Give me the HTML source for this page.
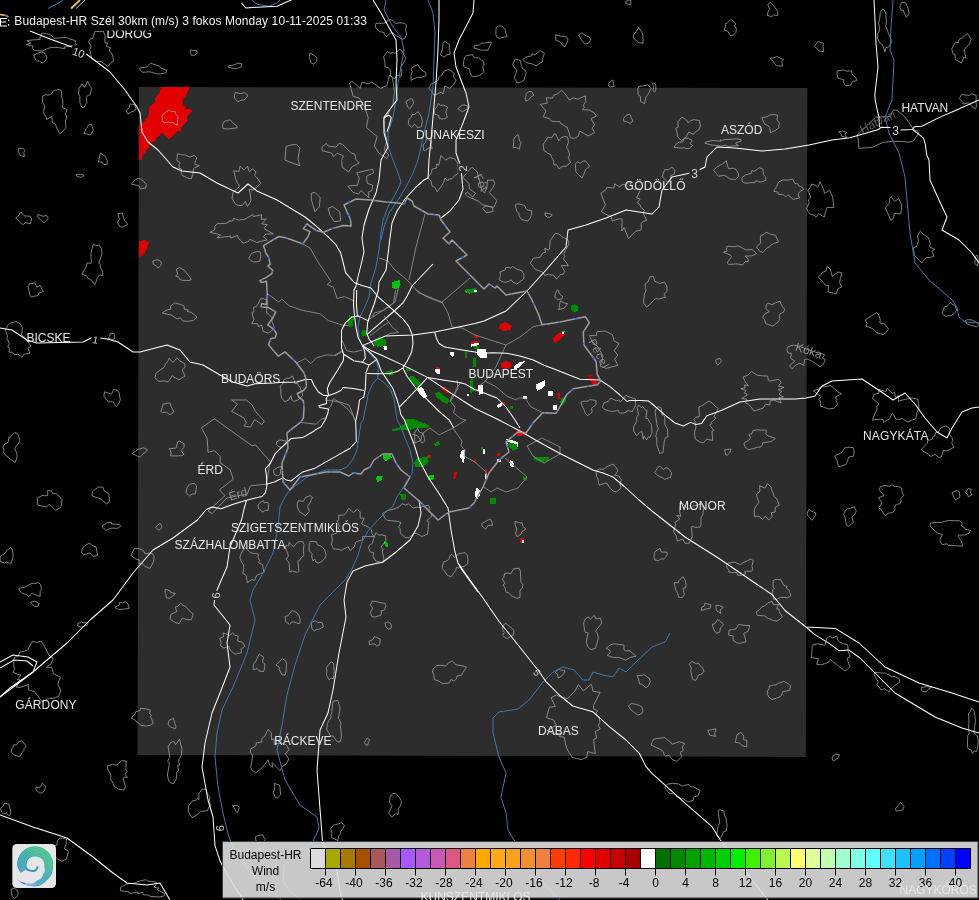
<!DOCTYPE html>
<html><head><meta charset="utf-8"><title>Budapest-HR Wind</title>
<style>html,body{margin:0;padding:0;background:#000;overflow:hidden}body{width:979px;height:900px;position:relative;font-family:"Liberation Sans",sans-serif}svg{position:absolute;left:0;top:0;display:block;will-change:transform}text{font-family:"Liberation Sans",sans-serif;font-size:12px}.rd{fill:none;stroke:#fff;stroke-width:1.02;stroke-linejoin:round}.rv{fill:none;stroke:#3f78b4;stroke-width:1}.tn{fill:none;stroke:#a4a4a4;stroke-width:0.78}.bd{fill:none;stroke:#8c8c8c;stroke-width:0.9}.bl{fill:none;stroke:#3c6cd8;stroke-width:1.1}.lb{fill:#e6e6e6}.fl{fill:#9a9a9a;font-size:11px}.dr{fill:#b40000}.r{fill:#e20000}.g{fill:#008c00}.w{fill:#fff}.g2{fill:#00c800}</style></head><body>
<svg width="979" height="900" viewBox="0 0 979 900">
<rect x="0" y="0" width="979" height="900" fill="#000"/>
<polygon points="139,87 807.3,88 805.8,756.9 137.5,754.9" fill="#2d2d2d"/>
<polygon class="r" shape-rendering="crispEdges" points="161.2,87 190.2,87 185.9,95.8 182.8,99 182.8,104.3 187,109.6 190.2,108.5 192.3,111.7 187,116.9 187,121.2 180.7,127.5 180.7,131.7 177.5,130.7 169,139.1 161.7,132.8 158.5,137 156.4,138 155.3,141.2 150,143.3 149,147.5 142.7,154.9 141.6,159.2 139,160.2 139,125.4 142.7,123.3 149,114.8 149,107.4 155.3,102.2 155.3,97.9 159.6,92.7"/>
<polygon class="r" shape-rendering="crispEdges" points="139,241.5 144.8,240 149,242.5 144.8,253.1 141.6,256.3 139,256.9"/>
<polygon class="g" shape-rendering="crispEdges" points="348.7,315.3 353.8,316 353.1,325.4 350.2,327.6 347.3,324 348.7,319.6"/>
<polygon class="g" shape-rendering="crispEdges" points="361.7,330.5 366.1,329.7 366.8,334.8 363.2,337 361,334.8"/>
<polygon class="g" shape-rendering="crispEdges" points="374,340.6 379.8,336.2 386.3,340.6 385.6,345.6 378.4,347.1 374,345.6"/>
<polygon class="g" shape-rendering="crispEdges" points="387,370.9 392.8,370.2 392.8,374.5 389.2,376 387,373.8"/>
<polygon class="g" shape-rendering="crispEdges" points="405.8,368 409.4,366.6 410.1,370.9 407.3,371.6"/>
<polygon class="g" shape-rendering="crispEdges" points="408.7,376.7 413.8,376 421.7,383.9 418.8,388.3 414.5,383.9 410.1,380.3"/>
<polygon class="g" shape-rendering="crispEdges" points="434.7,393.3 439,391.9 449.2,400.5 447.7,404.2 441.9,401.3 436.2,396.9"/>
<polygon class="g2" shape-rendering="crispEdges" points="465,290 475,290 475,292.9 469.4,293.6 465,292.2"/>
<polygon class="g" shape-rendering="crispEdges" points="465,350.7 466.8,350.7 466.8,357.2 465,357.2"/>
<polygon class="g" shape-rendering="crispEdges" points="470.8,378.2 473,378.2 473.7,391.2 470.8,394 470.1,389.7"/>
<polygon class="g" shape-rendering="crispEdges" points="404.4,418.6 414.5,418.6 414.5,420.5 404.4,420.5"/>
<polygon class="w" shape-rendering="crispEdges" points="383.4,346.4 387,345.6 387.3,349.2 384.1,350"/>
<polygon class="w" shape-rendering="crispEdges" points="449.9,352.9 452.8,351.4 453.2,357.2 450.6,355"/>
<polygon class="w" shape-rendering="crispEdges" points="434.7,370.2 436.9,368 439.8,368.8 440.2,374.6 436.9,373.8"/>
<polygon class="r" shape-rendering="crispEdges" points="436.2,368 439.8,368 439.8,369.3 436.9,369.6"/>
<polygon class="w" shape-rendering="crispEdges" points="418.8,388.3 421.7,386.1 427.5,396.9 424.6,398.4 421.7,395.5 418.1,391.2"/>
<polygon class="w" shape-rendering="crispEdges" points="467.2,394 468.7,394 468.7,396.2 467.2,396.2"/>
<polygon class="r" shape-rendering="crispEdges" points="441.2,387.5 443.4,386.8 450.6,391.9 449.2,393.3 446.3,391.9"/>
<polygon class="g2" shape-rendering="crispEdges" points="392.1,282.2 399.6,280 400.7,284.5 396.2,289 392.1,287.9"/>
<polygon class="g" shape-rendering="crispEdges" points="465.2,289 476,288.3 476.6,292.4 468.1,293.5"/>
<polygon class="w" shape-rendering="crispEdges" points="474.2,290.2 476.6,290.2 476.6,292.4 474.2,292.4"/>
<polygon class="g" shape-rendering="crispEdges" points="386,371 392.8,370.6 392.8,374.4 387.2,375.5"/>
<polygon class="g" shape-rendering="crispEdges" points="464.7,350.8 467,350.8 467,357.5 464.7,357.5"/>
<polygon class="g" shape-rendering="crispEdges" points="473,357.5 475.7,357.5 475.7,366.5 473,366.5"/>
<polygon class="r" shape-rendering="crispEdges" points="499.6,324.9 505.2,322 511.9,326.1 509.7,330.1 502.9,331 499.1,328.3"/>
<polygon class="r" shape-rendering="crispEdges" points="552.7,339.3 558.7,333.3 564,332 564.7,335.3 560,339.3 555.3,343.3"/>
<polygon class="g2" shape-rendering="crispEdges" points="562.4,330.6 564.6,330.6 564.6,332.4 562.4,332.4"/>
<polygon class="w" shape-rendering="crispEdges" points="562.2,332.2 564,332.2 564,333.8 562.2,333.8"/>
<polygon class="r" shape-rendering="crispEdges" points="473.7,335.1 477.5,335.1 477.5,338.4 473.7,338.4"/>
<polygon class="r" shape-rendering="crispEdges" points="471,341.8 478.2,340.7 478.9,343 471.5,344.3"/>
<polygon class="w" shape-rendering="crispEdges" points="471.2,344 478.9,342.8 478.9,345.2 471.5,346.6"/>
<polygon class="g" shape-rendering="crispEdges" points="473,346.5 479,345.5 479,348.5 474,348.5"/>
<polygon class="r" shape-rendering="crispEdges" points="501.3,363.3 506,360.7 510,362.7 512,365.3 510,367.3 505.3,369.3 501.3,367.3"/>
<polygon class="w" shape-rendering="crispEdges" points="477.1,348.5 486.1,348.5 487.2,357.5 480.4,357.5 477.1,354.2"/>
<polygon class="w" shape-rendering="crispEdges" points="450.1,352.2 453.5,351.9 453.5,356.4 451.2,355.3"/>
<polygon class="w" shape-rendering="crispEdges" points="435.5,367.6 439.3,367.6 440,374.4 436.6,373.3"/>
<polygon class="r" shape-rendering="crispEdges" points="435.5,367.2 439.3,367.2 439.3,368.6 435.5,368.6"/>
<polygon class="w" shape-rendering="crispEdges" points="513.3,366.7 520,362 524.7,361.3 520,366.7 515.3,370"/>
<polygon class="w" shape-rendering="crispEdges" points="383.8,346.3 386.7,346.3 386.7,349.7 383.8,349.7"/>
<polygon class="g" shape-rendering="crispEdges" points="409.7,380 416.4,380 422,386.7 418.7,387.9 414.2,384.5"/>
<polygon class="g" shape-rendering="crispEdges" points="435.5,392.4 440,393.5 449,399.1 447.9,403.6 442.2,401.3 436.6,396.9"/>
<polygon class="g" shape-rendering="crispEdges" points="470.3,380 473,380 473,391 470.3,391"/>
<polygon class="g" shape-rendering="crispEdges" points="404,419.3 416.4,420.4 425.4,423.8 429.9,426.1 427.6,428.3 414.2,428.3 407.4,430.6 400.7,429.4 392.8,431.7 392.1,429.4 399.6,427.2 405.2,423.8"/>
<polygon class="g" shape-rendering="crispEdges" points="433.3,444 438.9,440.7 440,445.2 435.5,445.8"/>
<polygon class="g2" shape-rendering="crispEdges" points="382.7,455.3 390.6,454.2 391.7,457.5 386.1,460.9 382.7,458.7"/>
<polygon class="g" shape-rendering="crispEdges" points="416.4,458.7 427.6,456.4 428.8,462 424.3,466.5 415.3,466.5 414.2,463.1"/>
<polygon class="g2" shape-rendering="crispEdges" points="428.8,475.5 434.4,474.4 434.4,478.9 429.9,481.1 427.6,478.9"/>
<polygon class="g2" shape-rendering="crispEdges" points="375.5,476.6 382.7,476.2 381.6,480 377.1,482.2"/>
<polygon class="g" shape-rendering="crispEdges" points="399.6,493.5 406.3,493.5 406.3,499.1 401.8,500.2"/>
<polygon class="g2" shape-rendering="crispEdges" points="383.8,540.7 388.3,542.9 388.3,547.4 384.9,546.3"/>
<polygon class="g" shape-rendering="crispEdges" points="490.1,498 496.2,498 496.2,503.6 490.1,503.6"/>
<polygon class="w" shape-rendering="crispEdges" points="506.3,438.9 517.5,441.8 518.7,446.3 516.4,448.4 507.4,443.9"/>
<polygon class="g" shape-rendering="crispEdges" points="507.3,441.8 516.5,444 517.8,448.7 513,450.8 508.4,446.3"/>
<polygon class="g" shape-rendering="crispEdges" points="533.3,456.4 549,457.5 547.9,460.9 540,462 534.4,459.8"/>
<polygon class="g" shape-rendering="crispEdges" points="523.1,475.5 527.6,478.9 525.4,481.1 522.5,478.9"/>
<polygon class="g" shape-rendering="crispEdges" points="480.5,447 482.5,447 482.5,449.5 480.5,449.5"/>
<polygon class="w" shape-rendering="crispEdges" points="417.5,386.7 423.1,389 427.6,396.9 423.1,398 418.7,393.5"/>
<polygon class="w" shape-rendering="crispEdges" points="478.2,384.5 482.7,384.5 482.7,393.5 479.3,394.6 478.2,390.1"/>
<polygon class="w" shape-rendering="crispEdges" points="496.2,405.8 501.8,402.5 505.2,403.6 498.4,408.1"/>
<polygon class="w" shape-rendering="crispEdges" points="467,394 469.2,394 469.2,396.2 467,396.2"/>
<polygon class="w" shape-rendering="crispEdges" points="522.5,396 526.7,396 526.7,398.5 522.5,398.5"/>
<polygon class="w" shape-rendering="crispEdges" points="461.3,450.8 464.7,449.7 464.7,458.7 463.1,464.3 461.3,458.7 459.6,457.5"/>
<polygon class="w" shape-rendering="crispEdges" points="482.7,448.5 485,448.5 485,454.2 482.7,454.2"/>
<polygon class="w" shape-rendering="crispEdges" points="476,487.9 479.3,489 480.4,494.6 477.1,499.1 474.8,495.7"/>
<polygon class="w" shape-rendering="crispEdges" points="484.9,469.9 487.2,469.9 487.2,478.9 484.9,478.9"/>
<polygon class="r" shape-rendering="crispEdges" points="484.9,468.8 487.2,468.8 487.2,474.4 484.9,474.4"/>
<polygon class="w" shape-rendering="crispEdges" points="508.5,459.8 513,460.9 514.2,466.5 510.8,466.5"/>
<polygon class="r" shape-rendering="crispEdges" points="508.5,458.7 510.3,458.7 510.3,462 508.5,462"/>
<polygon class="w" shape-rendering="crispEdges" points="497.3,458.7 500.7,458.7 500.7,462 497.3,462"/>
<polygon class="r" shape-rendering="crispEdges" points="497.3,453 500,453 500,456.4 497.3,456.4"/>
<polygon class="r" shape-rendering="crispEdges" points="441.1,387.9 444.5,387.2 450.1,392.4 447.9,393.5 443.4,390.8"/>
<polygon class="r" shape-rendering="crispEdges" points="428.1,455.3 431,455.3 431,458.2 428.1,458.2"/>
<polygon class="r" shape-rendering="crispEdges" points="454.2,471.7 456.9,471.7 456.9,474.4 455.1,478.9 453,478.9 454.2,475.5"/>
<polygon class="r" shape-rendering="crispEdges" points="474.4,458.7 475.7,458.7 475.7,463.1 474.4,463.1"/>
<polygon class="r" shape-rendering="crispEdges" points="515.3,430.6 524.3,430.6 525.4,435.1 517.5,436.2"/>
<polygon class="w" shape-rendering="crispEdges" points="517,432 523,432 523,433.3 517,433.3"/>
<polygon class="r" shape-rendering="crispEdges" points="501.8,402 505.2,402 505.2,404.7 501.8,404.7"/>
<polygon class="r" shape-rendering="crispEdges" points="519.8,538.4 524.3,538.4 524.3,542.9 519.8,542.9"/>
<polygon class="w" shape-rendering="crispEdges" points="521.5,540 524.3,540 524.3,542.9 521.5,542.9"/>
<polygon class="g" shape-rendering="crispEdges" points="570.7,306.7 574.7,304 578.7,306.7 578,310.7 574,312.7 570.7,309.3"/>
<polygon class="r" shape-rendering="crispEdges" points="587.3,375.3 592,375.3 592.7,378 596,380 597.3,384 593.3,385.3 590.7,381.3 588,378.7"/>
<polygon class="dr" shape-rendering="crispEdges" points="587.3,375.3 592,375.3 592.7,378 595,379.4 589,379.4 588,378.7"/>
<polygon class="r" shape-rendering="crispEdges" points="557.3,393.3 560,393.3 560.7,399.3 558,399.3"/>
<polygon class="w" shape-rendering="crispEdges" points="536,384.7 542,381.3 544.7,380 544.7,385.3 542,388.7 537.3,390.7 536,388"/>
<polygon class="w" shape-rendering="crispEdges" points="547.7,390.7 552.7,390.7 552.7,396 547.7,396"/>
<polygon class="w" shape-rendering="crispEdges" points="552.7,405 556.7,405 556.7,410 552.7,410"/>
<polygon class="g" shape-rendering="crispEdges" points="560,401.3 563.3,397.3 566.7,397.3 565.3,402.7 561.3,405.3"/>
<polygon class="g" shape-rendering="crispEdges" points="510,406 512.7,406 512.7,408.7 510,408.7"/>
<polygon class="tn" points="34.4,50.3 32,48.4 33.3,46 26.2,44.6 31,43 26.8,40.5 34.6,39.8 40.2,39.4 39.7,37.6 41.1,37.2 41.4,33.3 46.3,33.6 52.1,35.7 53.7,38.1 55.3,38.3 61.4,37.8 66.4,37.5 69.7,39 75.8,40.7 74.8,42.1 76.5,44.7 69.7,46.2 64.2,47.1 64.8,48.7 58.6,47.6 55.1,47.4 51,47.5 47.6,48.6 42.5,50.9 37.6,50.8"/>
<polygon class="tn" points="94.9,31.3 100,31.7 103.2,31 105.1,35.6 104.9,42.8 107.6,42.9 106.5,46.4 110.9,47.9 109,50 112.6,54.9 113.6,61.1 111.1,62.5 108.1,66.5 101.2,61.7 99.9,61.3 96.7,61.7 93.5,59.5 91.8,58.8 90.9,54.9 90.2,51.2 89.6,49.4 91.2,46.8 88.5,41.7 90.4,38.8 92.9,38.2"/>
<polygon class="tn" points="44.3,61.5 42.4,63.1 39.4,61.1 36.5,60.8 34.3,57.4 34,55 37.5,53.2 41.6,52.1 44.2,52.4 45.4,54.4 46.9,57.1 45.9,60.4"/>
<polygon class="tn" points="166.5,70 166.1,72.8 163,73.5 157.9,74 152.3,72.5 150,71.8 142.6,72.3 140.9,70.5 139.4,68.6 141,67.6 146.8,67 147.7,65.9 150.5,63.2 156.8,65.2 159.7,66.1 160.2,67.6 160.9,68.1"/>
<polygon class="tn" points="190.2,52.7 190.7,50 194,50.5 196.4,50.4 197.3,53.2 194.4,55.3 191.5,55.3"/>
<polygon class="tn" points="237.4,68.4 235.6,68.6 228.6,67.4 228.8,65.7 233.7,65.1 238,63.1 241.7,63.7 241.7,66.4"/>
<polygon class="tn" points="309.2,57.5 310,53.3 314.2,55.2 317,58 316.5,61.4 313.7,64.2 310.6,62.4 310.3,59.7"/>
<polygon class="tn" points="42.6,102.3 42.6,96.1 45,94.8 49,95.1 51.9,93.5 53.5,90.4 56.7,90.1 59,89.4 61.5,90.9 61.7,97 62.7,100.1 62.9,104 62.3,107.6 67.3,109.7 65.2,114 66.8,117 65.5,120.8 65.8,127.9 61.6,132.7 59.7,133.7 55,123.7 52.8,122.9 52.2,120.6 51.8,116.4 46.5,119.5 46.6,117.5 44.1,114.3 43.5,111.3 44.8,106.2"/>
<polygon class="tn" points="78.6,94 79,87.5 80.6,86.9 81.9,83.7 84.5,87.4 87.7,81.4 90,86.4 91.6,87.9 90.3,94.5 87.6,95.6 86.3,97.7 86.9,102.6 83.6,108 81.7,107.2 79.9,102.5 79.8,96.4"/>
<polygon class="tn" points="89.9,134.9 87.8,134.2 84,133.4 86.1,128.6 87.3,127.4 88.5,124.9 91.2,123.9 92.8,128.5 93.2,130.6 90.9,134.5"/>
<polygon class="tn" points="18.2,151.4 18.6,148.2 23.4,148.5 24.9,150.5 23.8,152.4 24.3,156.8 20,155.2"/>
<polygon class="tn" points="103.5,164.4 102.1,162.1 98.3,162 99.9,155.5 100.6,153.1 103.6,155.5 105.1,156.1 107,160.2 107.2,164.6"/>
<polygon class="tn" points="84,175.5 81.8,177.2 78.4,176.9 76.3,175.8 76.3,174.5 80.5,174.3 82.3,174.7"/>
<polygon class="tn" points="140.7,179.1 143.6,181.3 146.4,184.8 145.5,188.2 140.5,188.7 138.8,185.6 137.1,185.3 131.4,184.2 134.9,179.9 138.4,178.3"/>
<polygon class="tn" points="129,107.8 129.5,105.7 130.3,103.8 134.8,104.9 136,108.4 134.6,111 131.9,111.5 128,114.1 126,110.8"/>
<polygon class="tn" points="31.6,219 30.6,223.8 25.5,222.6 23.5,224.4 20.8,223.5 18.8,220.8 15.7,217.7 17.4,217 21,212 24.3,215.9 26.3,216 30.2,216.3"/>
<polygon class="tn" points="37.2,216.7 38.1,214.6 43.6,216.5 46.1,214.9 48.2,218.1 46.9,220 43.8,223 41.4,220.5"/>
<polygon class="tn" points="120.4,226.9 117.5,222.9 118.3,221 119.5,219.4 117.8,213.6 122.5,213 123.5,218.1 124.6,220.3 127.6,224.4 122.7,227"/>
<polygon class="tn" points="102.5,271 102.8,275.6 99.8,274.7 97.6,277.3 96.7,280.2 94.9,284.6 91.5,280.6 89.9,279.3 87.6,278.2 86.5,275.8 81.9,274.2 85.9,267 87.2,262.8 91.1,263.4 91.5,262.3 91.1,258.6 91,253 93,244.5 96.5,245.5 99.2,244.8 101.5,248.9 101.9,253.9 98.8,263.3 100.3,264.1 100.3,267.2"/>
<polygon class="tn" points="37,287.3 40,285.4 43.4,291.6 39,292.9 38.2,295.5 35,296.1 31.6,297.1 30.4,296.5 29.2,291.6 28.2,286.4 29.8,283.4 33,283.3 34.9,282.8"/>
<polygon class="tn" points="169.7,123 168.6,121.9 164.1,122.9 162.4,120.3 161.9,116.3 163.4,113.9 166.8,111.2 169.4,109.9 170.8,111.3 175.4,111.7 175.3,113.9 178.4,116.7 177.5,119.9 177.4,125.4 172.6,122.6"/>
<polygon class="tn" points="240.3,93.6 244.7,92.7 247.5,95 246.9,97.2 244.3,99.8 240.8,100.3 237.7,101.8 234.7,98.1 234.2,96 235.4,92.4"/>
<polygon class="tn" points="232.7,122.7 236.3,125.6 237.3,127.8 230.5,128.7 228.3,128.9 226.5,128.8 223.1,128.7 222.4,125.3 224.4,121.2 227.8,120.6 229.9,119.8"/>
<polygon class="tn" points="195.5,160.7 194.8,164.2 199.3,165.7 194.5,167.8 193.7,168.5 192.9,173.4 191.4,178.7 187.8,178.3 182.2,175.3 181.2,173.4 181.7,169 179.1,168.5 179.1,164.8 180.2,162.9 176.8,160.3 177.5,153.7 181.4,154.7 185.7,155.1 189.9,157.1 194.2,155.4 196.8,157.9"/>
<polygon class="tn" points="253.2,190.2 249,189.1 250.2,192.9 250.9,200.9 247.5,206.5 245.3,201.4 242.4,205.6 237,205.1 234.9,203.4 232.1,198.4 232.9,192.4 239.1,186.9 239.1,185 237.5,183.2 236,179.8 235.3,177 233.7,170.8 239,171.4 240,166.1 243.8,169.9 247.4,166.3 249.4,171.8 252.5,168.9 255.9,171.7 254.6,175.4 257.1,177.9 260.8,183.3 257.1,187 253.6,188.9"/>
<polygon class="tn" points="229,221.1 232.7,220.9 233.6,218.3 239.1,220.3 240.2,219.6 243.9,219.6 246.1,218.5 252.8,214.5 253.5,216.5 261.6,214.7 261.3,219.3 266.3,219.1 261.7,223.8 267.5,224.7 264.5,227.3 265.2,229.4 273.4,233.9 265.8,234.1 263.5,236.8 267.2,240.1 260.6,241.4 256.5,242.5 249.7,239.2 248.4,241.6 242.9,243.2 240.9,240.7 238.1,237.9 237.6,235.5 230.7,238 230.4,236.2 216.9,237.8 220.5,234.9 210.1,232.3 214.6,229.8 215,226.1 217.3,223.7 225.8,223.4 228.5,222.2"/>
<polygon class="tn" points="250.7,260.4 248.6,258.2 251.6,253.4 252.9,252.8 256.3,251.7 259.9,251.6 260.8,254.6 260.5,258.1 259.8,261.2 256.6,261.8 253.7,262"/>
<polygon class="tn" points="158,259.8 160.1,260.9 161.4,262.7 160.7,265.6 158.1,268.2 156.2,265.7 153.6,264.5 152.6,261.3 155.8,260"/>
<polygon class="tn" points="184.5,270.3 186.5,273.1 188.7,275.7 191.4,279.5 189.1,280.5 182.6,280.4 179.6,279.2 178.9,277.1 175.6,276.1 177.7,274.3 176.4,269 179.6,267.7"/>
<polygon class="tn" points="393.3,20.8 395.5,23.4 399.9,22.8 404.1,23.2 406.4,24.9 405.7,29.7 406.6,34 404.7,38.4 402.2,39.4 394.8,34.8 392.1,32.5 390.3,33.4 386.4,36.6 384.3,34.8 384.1,32.5 379.8,31.7 375.2,27.1 375.9,23.4 382.4,23.3 386.9,22.4 387.2,20.2 390.4,19.6"/>
<polygon class="tn" points="385.1,67.1 384.9,62 383.6,56.8 387.4,51.6 390.8,54 391.7,52.2 394.2,53.2 395.7,52.7 398.2,50.7 399.9,49.3 401.9,50.9 404.1,55.2 405.9,58.2 403.4,63.2 400.5,67.7 401.9,71.1 401,76.4 397.6,75.3 396.4,75.6 394.8,78.9 391.7,76.6 390.7,76.1 390.1,69.6 388.4,67.7"/>
<polygon class="tn" points="417.9,64.6 420,68.2 421.4,69.9 426,72.7 425.9,75.8 420.1,77.8 417.9,77.2 416.9,77.4 411.1,80.3 411.1,75.2 412.3,71.5 410.8,68.6 414.6,65.9"/>
<polygon class="tn" points="449.5,44.4 449.2,48.8 449.5,50.6 450.5,54.1 447,54.8 443.9,57.3 440.4,54.4 441.9,50.9 442.7,48 443,43.5 444.9,41.4"/>
<polygon class="tn" points="491.5,42.1 490.9,44 489.5,46.8 488,50.1 484.9,50 482.1,50.2 480.3,49.8 473.8,48 474.6,45.6 479.7,44.9 481.4,43.1 484.4,43"/>
<polygon class="tn" points="467.5,68.2 464.1,67 463.3,64 463.9,60.4 464.8,56.9 466.1,55.7 472.6,54.6 474.2,57.8 478.5,57.8 480.4,59.3 483.2,61.4 484.1,64 482.8,66.8 483.9,71.6 482.5,73.4 478.9,75.7 472.4,76.9 469.9,72.3 469.7,69"/>
<polygon class="tn" points="499.5,38.3 497.2,37.6 495.9,34.8 495.9,31.3 496.3,27 499.1,25.8 502.5,26.4 505.4,29.9 505.3,31.7 507.2,36.6 504.6,37"/>
<polygon class="tn" points="521.5,65.6 522.2,68.2 524.9,69.8 526.3,73.1 524.3,78.2 524.1,80.1 521.5,81.7 517.1,83 515.5,79.8 514.2,78.2 516,73.3 516.9,70.8 512.6,64.7 514.9,59.4 518.3,59.8 520.2,60.4"/>
<polygon class="tn" points="534.8,54.8 540.4,50.4 544.4,53 543.1,57.5 542.1,59.8 542.6,62.1 539.8,63.2 536.1,65.8 533.4,64.4 531.2,63.6 526.3,62.8 523.1,59.6 525.2,57.3 531.4,55.9 532,53.7"/>
<polygon class="tn" points="555.8,40.3 555.7,34.8 560.7,36.2 564.2,36.2 566.7,37 568,39.9 566.4,43.8 564.4,47.1 560.5,42.3 559.1,41.5"/>
<polygon class="tn" points="584.7,44 581.9,40.1 580.9,39.3 578.8,34.9 581.9,32.9 586.2,36 588.9,36.4 590.7,39.3 588.4,43.4"/>
<polygon class="tn" points="643.1,43.4 638.9,42.6 637.2,41.2 635.1,39.5 633.3,38.1 633.9,34.2 635.9,32 638.8,27.4 641.7,32.2 643.1,35.5 642.9,36.7"/>
<polygon class="tn" points="630.8,2.2 630.7,4.9 628.3,4.2 625.8,3.4 625.6,1.7 629.1,0 630.8,0.5"/>
<polygon class="tn" points="612.9,80 613.4,83.8 614.2,86.3 610.4,87.1 608.4,85.9 608.9,83.4 610,82"/>
<polygon class="tn" points="531.4,91.4 533.9,95.2 530.7,97.1 528.9,99.7 525.8,101.2 525.3,98.3 526.4,93.5 527.9,92"/>
<polygon class="tn" points="638.7,86.3 642.2,86 645,85.8 647.7,84.8 651.1,88 648.6,93.5 647.1,95.6 646,96.8 644.5,103.8 640.5,101.4 640.5,96.6 638.1,94.5 637.8,89.6"/>
<polygon class="tn" points="565.8,126.8 562.7,124.5 560.9,123.8 559.7,121.5 556.5,121.6 551.3,121.2 549.5,118.8 543.2,116.7 545.1,112.9 546,111 540.2,104.3 547.3,103.2 546.4,97.7 552.4,98.2 553.8,95.2 557.7,93.8 561.7,90.2 565.3,94.2 569.2,99.9 573.6,97.8 576.5,98.9 577.4,99.3 585.4,95.9 585.8,101.4 583.5,105 584.3,107.6 582.2,109.7 589,110 594.1,112.7 596.3,116.1 591.1,118.6 594.6,124.9 592.1,128.1 594.7,132.7 588.1,135.9 579.8,131 578.2,136.3 574.7,138.3 570.7,138 567.1,127"/>
<polygon class="tn" points="555.7,133.9 558.7,140.8 561.2,137.6 564.7,136.5 567.6,137 568.5,142 566.5,147.3 568,149.6 569.8,155 568.2,157.2 570.5,162.5 566,166.4 563.2,166.2 558.7,168.8 556.6,164.6 554,165.2 553.3,159.7 551.6,157.4 550.8,154.5 549.2,154.1 543.9,150.4 543.2,144.2 544.5,142.5 548,137.2 551.7,137.9 554.1,133.8"/>
<polygon class="tn" points="518.1,134.5 519.6,140.9 521.1,142.6 520.1,145.1 519.5,149.1 515.3,147.2 513,147.9 513.8,142.1 513.6,139.3 516.1,135.9"/>
<polygon class="tn" points="580.4,163.3 582.7,161 585.3,160.8 588.8,165 589.7,166.2 585.4,169.8 584.9,171.6 583.8,174.3 582.1,177.9 577.5,173.9 575.9,171.8 575.6,168 575.3,163.9 577.7,161.8"/>
<polygon class="tn" points="632.9,121.2 629.9,123.3 626.7,121.6 623.7,121.2 623.6,118.4 626,115.4 629.7,114.1 631.2,117.5"/>
<polygon class="tn" points="453.6,84.8 449.8,88.4 444.9,86 444.4,88.7 442.9,94 441.2,92.1 434.1,95.3 431.7,91.5 428.9,88.1 431,84.5 436.6,81.3 438.5,79.9 438.4,77.9 440.3,75.9 442.3,74.8 444,70.9 449,69.5 454.3,73.4 453.4,76.6 456.2,80.1"/>
<polygon class="tn" points="406.8,104.2 405.8,101.7 409.9,99 412.4,98.9 413.7,103 412.3,105.1 409.8,109 408.2,107.7"/>
<polygon class="tn" points="420,114.6 421.5,117.4 422.3,121.2 421.6,126.5 417.5,127.9 416.4,125.6 414.5,124.3 411.5,127.3 408.3,124 408.8,119.3 410.8,117.7 412.8,114.1 414.1,114.9 416.3,112.9 418.1,111.8"/>
<polygon class="tn" points="447.3,117.4 444.7,118.7 441.5,119 438.9,118.1 438.8,115.5 434.5,114.2 434.1,109.8 436.8,107 438.2,103.4 440.5,105.6 443.2,105 445.6,106.2 447.6,107 445.8,111.9"/>
<polygon class="tn" points="457.8,108.7 461.9,105.3 463.7,104.8 467.7,105.9 467.1,109.1 462.4,111.8 460.6,110.5"/>
<polygon class="tn" points="432.3,148.5 428.8,147.9 425.6,150.3 423.5,150.3 423.2,144.7 425.4,142.7 426.8,138.3 428.1,139.4 431.6,141.5 431.1,144.6"/>
<polygon class="tn" points="436.8,167.9 436.4,164.1 438.9,165.2 439.9,160.1 440.9,155.4 444.4,159.1 445.7,160.1 450,157.5 454.8,158.9 457.5,162.7 457.8,165.3 458.3,173.5 454.7,175.3 451.9,178.8 448.7,179.1 447.7,181.1 445.1,178 443.5,182.8 441.3,186.3 437.2,191.8 434.8,187.4 432,185.9 431,181 427.9,178 431.4,172.6 432.1,169.2"/>
<polygon class="tn" points="515.1,204.9 517.2,203.8 522.5,204.7 524.6,205.8 526.1,208.6 527.3,209.9 531.7,210.8 531.2,215.8 529.9,218.5 528,221.1 523,219.9 520,217.8 519.1,215.7 518.8,213.5 516.8,211.1"/>
<polygon class="tn" points="545,215.4 544.9,212.9 548.4,213.5 551.7,214.4 552.1,215.3 549.6,217.2 547.3,217.1"/>
<polygon class="tn" points="614.7,183.9 619.8,187 622.3,184.2 625.6,185.1 629.4,181.3 631.9,186.6 633.8,189.6 637.8,188.5 640.5,189.8 636.6,197.8 640.1,199.1 637.1,202.8 639.6,204.3 640.9,207.4 644.4,210.2 643.2,213.3 646.7,220.3 642.9,221.5 641.2,223.8 641.3,230 635.8,231.1 631.9,235 628.4,238.3 624.1,227.6 621.8,231 622.1,219.2 619.6,218.7 615.9,219.7 612.2,221.1 611.7,217.7 609.2,215.5 605.8,214.3 601.5,211.6 604.3,206.6 605.3,204.5 603.2,199.4 600.9,193.1 605.9,189.9 607,187.3 613.9,188"/>
<polygon class="tn" points="562.6,237.2 567.6,239.4 569.1,243.8 564.9,251.6 563.6,253.8 564.9,256.6 563.1,258.7 566.2,262.3 568.2,265.7 561.3,265.5 564.7,271.4 563.1,274.3 560.4,274.6 556.5,279.1 553.3,274.9 551,275.3 548.9,274 544.8,275.5 543,272.5 541.1,271.5 535.6,269.5 534.2,267.8 530.3,263.2 533.2,258.4 540.4,257.1 542,253.8 543.8,252.5 545.6,252.4 544.6,248.2 548.8,250.3 549.7,247.5 550.2,240.5 555.2,233.3 559,234.1"/>
<polygon class="tn" points="517.8,269.5 521.9,270.8 524,274.8 523.6,279 518.7,282.6 516.8,284 512.9,282.2 511.3,279.9 509.7,281 505.8,282.3 503.4,281.9 499,279.9 500.5,275.4 500.1,271.9 505,270 505.9,267.5 508.6,267.5 511.1,268 512.6,266.5 514.4,267.8"/>
<polygon class="tn" points="561.9,298.9 557.2,299.7 554.8,297 555.6,293.4 557.6,289.7 559.8,294.1 562.5,296.3"/>
<polygon class="tn" points="660.2,298.4 658.3,299.1 655.7,298.4 653.8,300.2 651.2,303.1 646.7,307.1 643.7,303 644,298.1 644.5,293.5 646,290.5 645.6,287.6 645,284.1 647.8,282.2 650.2,276.6 653.5,276.6 654.7,281.2 656.6,282 659.6,283.5 664.5,282.1 667,286.4 666.9,291.3 664.1,294.1 665.5,297.3"/>
<polygon class="tn" points="733.3,35 730.5,35.9 727.8,31.2 724.1,30 725.5,26.9 725,24.2 727.6,22.9 730.7,19.5 732.6,20.5 735.8,23.7 734.3,25.9 736.4,28.5 736,32.3"/>
<polygon class="tn" points="773.9,6.2 776.1,9.2 777.9,11.8 777.8,15.4 773.6,15 771.8,16.6 767.1,15.4 768.4,10.7 769.8,9.5 767.8,4.4 770.5,2.5"/>
<polygon class="tn" points="774.6,63.5 773.9,61.9 769.8,58.4 773.4,57.8 777.3,56.5 780.8,58.6 783.4,59.2 781.9,61.8 782.3,66.1 776.6,65.8"/>
<polygon class="tn" points="820.4,42.3 823.4,43.2 823,46.5 823.7,51.8 819.9,51.1 818.3,50.5 817.1,48.5 814.3,46.5 817.7,41.8 818.5,41.6"/>
<polygon class="tn" points="850.7,85.1 845.6,85.7 843.7,83.1 843.8,79.8 842.3,79.3 837.9,78.3 837,73.2 837.2,70.8 844.2,70 846.4,71.1 851.6,70.9 851.9,73.4 853.5,76 855.7,77.3 856.7,80.5 852.7,81.5"/>
<polygon class="tn" points="969.6,43.8 966.1,47.7 964.2,49.9 964.5,52.4 966.2,58.2 963.7,57.1 961.5,63 958.1,61.1 955.2,59.5 955.1,54.6 952.8,53.6 951.8,48.9 953.3,45.6 955.4,42.4 958.5,42.7 958.7,40.2 960.9,38.4 962.6,37.7 967.3,33.4 971.1,39"/>
<polygon class="tn" points="891.3,40.1 890.8,44.2 887.8,47.7 886,47.4 884.9,51.8 883.3,46.4 881.4,43.8 880.5,43.5 879,41.1 877.5,38.3 877.8,33.5 879.3,31 879.4,26.6 878.5,23.4 879.5,19.9 880.3,12.6 882.2,9.1 884.1,10 885.8,13 886.4,22.1 885.7,26.9 886.7,27.9 887.3,30.2 888.6,33.6"/>
<polygon class="tn" points="906.2,17.3 903.9,12 903.2,10.1 901,10.2 899.7,6.7 901.7,2.5 905.4,2.7 907,5.7 908.1,8.4 909.2,13.8"/>
<polygon class="tn" points="971.7,93.8 976.2,95.4 976.1,99.1 975.9,102 976.8,106.7 974.8,109.2 969.2,103.4 968.5,102.8 963.1,104.1 962.9,102.3 959.3,98.6 961.8,94.5 967.1,95.2 969.4,95.5"/>
<polygon class="tn" points="845,134 846.6,137.6 841.3,136 841.3,134.7 838.7,131.8 842.3,131.1 846.7,132.3"/>
<polygon class="tn" points="777,119.5 777.6,120.8 779.8,123.2 778.9,125.3 778.8,127.7 775.3,130.4 770.6,132.7 769.6,127.3 767.4,125.1 764.9,124.5 763.8,122.2 761.6,117.8 767.6,116.6 769.5,115 774.2,114.5 777.5,115.3"/>
<polygon class="tn" points="682.1,117 686.5,120 688,122.7 690.5,120.9 693.5,119.6 699.5,120.6 700.4,126.1 698.7,129.9 694.6,132.5 693.4,134.4 688.7,132.1 687.6,134.1 686,137.2 681.6,140.5 677.7,137 676.9,132.1 675.8,128.3 678.2,127 677.9,121.9 679.8,119.6"/>
<polygon class="tn" points="684.1,147.7 681.5,148.1 674,147.4 675.8,144.5 679.1,142.1 682.6,142.1 684.5,138.1 688.6,138.3 692.4,140.8 689.9,143.5 692.7,145.5 689.1,148.6 685.5,148.5"/>
<polygon class="tn" points="719.3,145.5 714.8,145.4 709.7,144.6 704.8,143.1 706.8,141.6 713.2,140.5 720.8,141.2 720,140 722.7,140.3 724.8,139.6 730.1,139.3 736.9,138.9 741,139.6 741,141.3 736.1,142.7 735.8,143.8 738.6,145.6 732.5,145.9 728.8,146.6 725,145.1 720.9,146.3"/>
<polygon class="tn" points="718.4,176.3 716.9,174.4 716.1,173.2 713.5,170.3 717.2,166.9 720.5,164.9 721.9,164.5 726.3,160.7 727.4,165.6 728.5,168.5 733.7,168.2 736.3,169.8 738.5,173.8 738.4,176.6 735.8,179.4 730.2,179 725.6,176 724.2,175.2"/>
<polygon class="tn" points="754.9,182.7 752.1,182.6 745.1,183.3 742.3,181.6 741.8,177.7 745.8,174.8 751,173.5 751.9,170.5 754.2,171.3 759.4,167.8 762.9,169.1 763.3,174.4 765.8,177.3 766,180.1 761.2,182.1 755.9,180.9"/>
<polygon class="tn" points="801.8,186.9 803.7,189.5 800.1,191.3 798,194.1 799.5,198.1 793.2,199.3 787.8,194.7 785.7,196.8 782.5,194.3 778.5,194.4 777.9,192.1 773.8,191.3 775.3,188.3 776.8,186.6 777.3,184.3 779.1,181.7 782.5,180 788.2,180.1 792.5,179 795,183.7 797.5,183.6 799.3,186.5"/>
<polygon class="tn" points="808.5,199.9 810.9,197.2 807.9,190.6 809.9,188 811.9,184 815.8,185.3 817.8,187.6 820,181.8 822.2,186 823.5,189.6 824.6,193.4 829.7,190.3 830.8,192.9 832.6,196.8 833.2,200.6 833.7,207.6 827.1,207.5 826.2,209.7 825.2,212.7 824.6,216.8 822.2,215.9 818.5,213.5 816.1,217.1 814.4,215.4 810.4,214.3 808,211.6 806.7,208.2 809.1,202.7"/>
<polygon class="tn" points="675,170.7 673.8,174.5 670.8,175.5 670.7,181.6 667.3,181.8 663.8,178.2 662.2,177 663.2,173.2 664.8,169.6 668.5,169.8 671.9,167"/>
<polygon class="tn" points="653,90.4 653.6,87.6 652.7,83.2 655.2,83.2 655.8,86.1 655.8,89.5 654.7,92"/>
<polygon class="tn" points="778.7,241.9 773.4,243.6 770.7,245.3 769.9,246.7 766.9,248.1 762.9,252.5 759.9,251.5 756.5,246.8 760.6,243.1 760.6,240.9 760.3,238.2 760.5,235.7 764.2,234.4 766,232.1 770.4,234.2 774,234.9 775.9,235.9 777.1,238.9"/>
<polygon class="tn" points="738.1,245.8 743.1,248.5 746.4,250.1 751.9,249.4 754.2,251.3 756.5,253.6 751.6,255.9 745,256.1 748,258.7 748.2,261.9 745.2,261.5 742.5,265 737.2,263.9 728.8,264.4 727.1,263 731.1,257.3 731.5,256.5 730.4,255.2 723.5,252.2 727,251 726.4,249 727.1,246.3 734.3,246.7"/>
<polygon class="tn" points="888,213.8 885.3,207.9 888.2,204.3 889.4,203.3 889.6,198.2 891.5,196.7 893.7,200.5 895.1,201.2 898.7,198.4 899.3,199.8 901.6,204.9 901.4,210 900.7,213.8 896.8,213.5 894.4,213.3 893.4,218.4 890.7,220.3 889.5,217.1"/>
<polygon class="tn" points="926.3,257.7 924.4,259.6 921.5,262.8 919.6,260.5 916.4,257.4 914.2,254.7 914.2,253 913.1,247.9 916.8,246.3 917.2,244.2 918.5,241.1 917.4,235.7 920,231.4 924.5,235.3 927.8,237 929.4,240.2 930.3,244 929.5,246.8 934.6,249.2 931.9,251.2 933.9,256.1 930.7,257.4"/>
<polygon class="tn" points="837.6,288.9 836.5,293.9 833,293 831.5,292.8 828,291.8 828.5,285.3 826.2,286 824.5,283.9 823.3,282.2 818.3,277.2 822.5,272.4 826,271 827,266.7 830.2,269 832.3,276.3 833.8,275.1 837.9,272 842,272.9 840.4,278.4 839.5,282.4 841.7,287"/>
<polygon class="tn" points="975.1,256.8 976.8,255 978,258.6 978.3,261.4 977.2,266 974.9,263.3 975.1,260.8"/>
<polygon class="tn" points="9.2,343.8 8.5,341.1 6.8,338.9 7.6,336.2 5.3,330.2 7.9,325.4 10,323.1 15.9,321.6 20.4,323.9 22.3,327.7 21.7,334.8 22.7,336.2 25.2,337.6 26.5,340.2 27.8,342.1 31.1,345.9 27.9,348.4 30,353.1 23.8,354.2 22.2,357.4 17.9,354.1 14.8,354.8 12.3,352.3 8.8,352 9.9,348.3 7.7,347"/>
<polygon class="tn" points="113.3,339.6 108,338.2 109.6,336.5 110,333.7 113.8,333.7 114.7,335.2 114.8,338.1"/>
<polygon class="tn" points="111.5,394.2 113.6,389.4 117.4,390.4 119.5,393.2 119.6,396 120.3,399.5 119.2,403 116.4,406.6 112.6,401.6 110.2,401.8 108.4,401.9 106.8,399.6 103.8,396 104.6,391.7"/>
<polygon class="tn" points="8.8,437.2 10.5,437 14.8,432.4 17.8,434 19.9,440.4 18.7,443 15.6,446.9 14.8,449.2 16.8,452.8 17.1,457.3 15.1,462.5 10.6,459.4 8.9,457.7 5.5,455.2 3.7,452.5 4,450 2.8,447 4.9,443.9 8.3,442.1"/>
<polygon class="tn" points="37.1,498.5 41.9,495.6 45.9,495.7 47.7,495.7 47.7,490.5 51.4,490.9 52.8,493.9 55.8,493.6 60,497.1 62,499.6 61.3,505.8 60.6,507.7 55.7,510.3 51.2,506 49.2,504.2 46.2,507.1 42,506 38,505.3"/>
<polygon class="tn" points="103,487.2 104.3,491.2 105.8,491.7 109.2,494.4 109.1,495.8 109.5,501.4 106.7,504 101.8,499.8 99.8,498.6 98,498.1 91.9,495.7 92.5,491.8 94.7,489.6 98.8,487"/>
<polygon class="tn" points="106.1,530.5 102.7,527.4 102.6,525.2 105,524.2 106.8,522.6 111.6,522.3 111.7,524.1 119.3,524.4 120.7,526.1 117.7,528.3 111.8,528.1 108.7,529"/>
<polygon class="tn" points="90.6,544 93,546 96,546.8 96.8,551.2 97.6,555.1 93.2,556.8 90,553 88.6,553.2 83.7,554.9 81.6,552.5 82.6,547.9 85.1,545.5 88.8,543.4"/>
<polygon class="tn" points="13.1,555.8 12.4,559.5 11,563 9.4,563.4 6.5,561.9 4.8,563.1 0.2,561.6 0.2,556.1 3.2,554.6 5.1,553.3 7.1,550.1 11,547.5 12.7,550.9"/>
<polygon class="tn" points="28.8,584.9 31.6,583.5 34.3,583.4 38.8,582.8 40.7,584.6 41.4,589.6 40.1,591.7 40.2,596.5 34.8,594.6 32.1,593.1 28.8,596.6 26.4,594.6 22.8,593.5 19.1,590.1 19.2,588.3 25.9,586.8"/>
<polygon class="tn" points="144.9,553.8 148.4,553.2 152.3,553.5 154.2,556.9 153.7,561.1 151,566.6 149.8,568.3 145.1,566.5 141.9,563.4 138.9,563.4 139.3,560 135.7,558.9 131.2,555.7 134,548.8 139,548.6 142.6,550.2 144.1,551.9"/>
<polygon class="tn" points="141.9,455.4 139.2,457.1 135.4,455.1 132.1,453.6 135.5,451.1 138.3,449.4 143.4,447.8 147.6,449.7 145.2,452.6 143.5,453.4"/>
<polygon class="tn" points="174.9,317.5 172.1,315.5 171.1,315.1 162.2,313 167.1,309.7 170.6,309.4 170.5,306 174.9,302.8 181.7,304.8 184.1,306.2 184.2,309.2 188.2,309.8 187.3,311.4 191.7,312.5 197,317.1 193.2,320.5 188.4,321.2 183,321.2 180.4,317.9 177.1,318.8"/>
<polygon class="tn" points="185.1,376.1 183.2,377.1 178.9,379.9 174.3,377.3 172.2,375.6 169.7,379.7 168.1,381.8 165,381 158.5,381.4 155,377.5 156.1,373.2 161.1,369.2 163.6,367.8 164.9,365.7 165.5,364 167.9,361.1 169.2,358.2 172.9,362.5 177,357.7 179.6,360.8 184.8,363.6 185,367.4 182.1,370"/>
<polygon class="tn" points="171.4,407.1 173.8,411.5 171.4,414.1 169.8,414.5 166.4,412.3 162.4,412.5 160.8,411.4 162.1,407.9 162.9,404.4 168.5,402.9 170,402.9"/>
<polygon class="tn" points="179.6,441 184.1,443.8 183.9,447.5 181,450.5 183.9,454.4 181.9,455.7 178.5,455.8 176.2,456 170.5,455.8 171.2,453 169.4,448.6 175.6,448.2 176.2,447.6 177.5,442.1"/>
<polygon class="tn" points="195.2,493.8 192.4,494 189.4,495.8 186.1,492.7 186.7,488.4 188.6,485.3 190.9,483.9 194.3,483.3 196.4,485.9 196.2,489.2"/>
<polygon class="tn" points="158.5,530.2 155.5,527.1 157.7,525.4 159.9,523 161.7,525.8 161.8,527.8 160.4,529.3"/>
<polygon class="tn" points="266.5,313.1 267.8,313.2 269.5,315 271.8,317.5 272.2,322.3 274.3,327.3 271.6,331 268.2,333.1 263.1,331.3 261.6,325 258.5,326.6 257.7,323.8 251.7,323.5 253.9,320 252.9,316.2 252,312.7 254.1,311.4 253.4,307.5 256.9,306.1 260.5,298.8 263.7,298.7 267.5,300.7 266.8,308.8"/>
<polygon class="tn" points="280.8,388.8 280,386.7 282.7,384.1 283.7,380.2 286.9,378.2 289.7,378.1 292.6,376 294.2,380.4 295,383.4 297.7,383.3 298.2,385.6 299.7,386.6 301.8,391.8 302.7,395.6 299.9,398.1 298.5,399.7 294.2,401.4 292.2,400.2 291,395.8 288.6,400.2 284.6,401.6 281.9,398.3 280.9,395"/>
<polygon class="tn" points="281.6,440.1 285.7,441 286.2,443.3 283.8,446.4 281,447.4 278.2,446.3 276.2,444.3 276.6,441.9 279.6,440.2"/>
<polygon class="tn" points="279.6,475 277.4,475.8 274.4,474.8 273.4,470.2 274.7,469.5 277.5,467.5 281.5,466.4 280.5,471 280.3,473.8"/>
<polygon class="tn" points="262.3,512.1 260.8,509.9 258.5,508.5 258,505.1 260.5,502.1 263.5,500.7 264.1,502.8 267.8,502.3 268.6,504.3 268.2,510.6 265.5,510.2"/>
<polygon class="tn" points="305.4,497.6 310.3,495.6 312.4,497.1 309.4,504.3 308.1,505.2 307.5,506.7 309.4,511.3 305.4,515.8 301.9,513.3 299.4,511.8 297.7,507.9 297.2,503.7 298.5,500.5 303.2,501.5"/>
<polygon class="tn" points="258.6,562.7 262.7,564.8 262.9,567.4 264.2,572.2 260.5,573.7 256.9,575.2 254.5,580.4 251.7,579.5 247.5,582.8 246,575.3 242.8,573.4 243.8,568.6 243.5,567.4 243.7,564.8 241.7,562.4 239.8,557.4 241.5,552.7 244.1,549 245.4,547.6 250.3,552.7 253.6,553.5 258.4,554 258,557.6 259.6,560.6"/>
<polygon class="tn" points="284.8,546.2 289.1,545.7 288.8,542.3 293.5,546.9 295.7,544.2 298,541.8 302.7,541.6 304,544.5 303.3,551.8 304,555.5 301.8,557.1 299.7,560.2 297.9,561.1 298.9,571.5 297.3,572.4 292.2,570.9 289.8,572 289.2,563.3 287.8,561.3 286,559 288.3,556.4 287.8,553.6"/>
<polygon class="tn" points="309.2,543.7 310.4,541.4 313.9,541.5 316.4,541.9 318.2,545.5 319.7,545.4 322.5,547.3 324.8,550 326.2,555.4 324.9,558.3 322,561.2 318.5,563.1 316,562.1 314.8,559.1 312.9,560.9 311.6,556 312.4,553.9 309.1,551"/>
<polygon class="tn" points="175.5,593.6 170.7,597.5 169.1,598.4 166.1,597.5 166,594.6 165.1,593.2 165.1,589.1 169.8,590.8 170.6,592.4"/>
<polygon class="tn" points="559.4,304.7 560.5,300.9 563.5,302.8 567.8,303.8 566,305.5 564.4,308.1 558.6,309.6 559.7,306.2"/>
<polygon class="tn" points="591.5,408.5 592.1,412.3 587.6,415.7 585.3,413.1 583.8,409.2 582,406 580.9,402.3 583.7,401.2 587.9,401.2 589.9,399.6 595.8,400.4 596.2,404.4 592.7,407.2"/>
<polygon class="tn" points="633.8,408.3 632.4,411.7 627.2,410.4 626.4,412.2 622.8,413.1 619.4,413 618,410.1 615.9,411.1 610.1,411.3 604.7,409.5 602.4,407.3 603.9,402.9 608.2,401.5 610.8,398.2 616.9,401 618.4,399.9 620.6,401.8 626.1,395.2 627.3,396.2 632.3,398 635.4,398.8 635.5,403.6 635.9,405"/>
<polygon class="tn" points="648.1,436.8 646.7,439.9 643.9,436.1 643.3,439.3 642.2,432.9 641.7,431.2 639.3,432.7 636.6,435.9 633.7,430.9 633.6,426.6 636.9,421.2 636.6,417.2 638.5,414.6 637.1,407.7 638.7,405 641.3,407.7 642.7,406.2 644.8,409.3 646,410.6 647,410.5 645.7,418.3 647.8,418.6 649.9,422.5 651.4,424.4 652,433 649.6,437.6"/>
<polygon class="tn" points="604.9,483.2 599.2,485.2 598.3,481.6 597.6,477.8 596.5,476.1 596,471.1 599.2,469 604.1,469.3 606.1,467.2 609.9,465.4 613.3,464.1 616.4,468 618,470.9 614.6,475.4 619.2,476.1 620,478.1 621.5,479.8 619.9,483.6 621,488.3 616.3,492 613.1,491 609,486.8 607.1,483.4"/>
<polygon class="tn" points="521,534 517.1,536.7 515.7,533.9 516.7,528.6 515.1,525 515.1,521.4 519.5,522.7 522.2,523 522.9,526.3 525.9,529.1 522,531.5"/>
<polygon class="tn" points="491.1,519.8 492.8,525.2 488,525.5 485.6,529.2 482,526 481.7,523.5 485.9,521.2 489.3,519.4"/>
<polygon class="tn" points="450.9,576.9 447.2,575.2 444.4,570.8 442.1,568.5 443.3,562.1 447.5,560.5 449.2,558.5 450,555.8 451.6,554.2 454.7,557.7 458.3,553.9 465,552.6 467.3,555.1 468,559.8 467.7,564 464.1,566.3 460.5,567 458.4,567.9 456.3,567.4 455.7,570.6"/>
<polygon class="tn" points="520,597.6 516.8,598.3 511.1,595.7 508.5,592.6 506.1,592.3 504.9,587.3 502.9,585 504.9,583.5 502.4,579.1 503.7,577.7 504.9,573.1 508,573.1 511,573.6 513.5,568.9 519,568.2 520.5,571.3 520.4,576.1 520.9,579.4 520.9,581.6 522.9,584.9 522.3,588.1 520,590.1"/>
<polygon class="tn" points="368.4,527 371.4,529.8 372,533.8 374.1,536.6 362.6,536.4 362.9,540.1 360.6,540.3 357.2,541.4 355.8,542.3 354,547.1 350,550.6 348.3,546.7 341.3,550.2 337.8,549.3 333.4,548.9 331.3,544.1 332.6,540 331.2,535.1 336.6,532.9 339.9,529.9 337.8,527.8 339.7,526.2 337,520.9 338.8,519.8 338.7,515.3 343.7,515 345.7,513.3 348.7,508.5 353.2,512.5 357.4,509.2 360.2,512 360.1,518.1 364.1,518.2 361.6,523.8 363.6,525.1"/>
<polygon class="tn" points="385.9,540.7 380.9,547.2 383.3,549.7 382.2,551.1 384,559 382.2,563 379.5,561.9 375.8,561.1 372.9,556.2 373.7,552.7 370.3,552 368.4,547.5 369.8,544.9 372.5,543.1 373.1,540.2 375.9,532.5 378.8,535.3 381.1,534.8 385.6,535.7"/>
<polygon class="tn" points="413.4,508 417.3,507 418.8,507.7 428.2,505.2 430,508.4 428.1,511 431.9,513.8 431.5,516.3 426.8,520.7 429,522.3 428.3,526.2 428.1,530.3 427.4,534.2 421.8,536.6 416.7,533.4 413.9,533.5 409.2,537.7 405.3,537.6 401.7,534.4 400.3,533.1 400.1,528.7 398.5,527 401,522.7 397.8,521.4 387.3,520.3 385.3,518.8 382.6,513.5 387.4,510.6 394,509 396.9,507.7 398.9,506.9 402.1,503.7 405.8,505.1 408.6,503.7 410.4,505.8"/>
<polygon class="tn" points="423,433.5 421.8,435.9 420.8,440.1 418.6,441.4 414.8,443 414.6,437.4 414.7,434.7 414.9,432.2 417.6,428.3 419.3,432.1"/>
<polygon class="tn" points="764.6,314.3 769.3,311.4 766,309 766.1,305 768,303.1 772,304.6 777.1,302.2 780,301.3 781.8,305.8 784.7,309.2 783.7,311.9 780.2,313.9 779.1,315.3 779.7,318.6 778.8,321.4 774.9,324.5 772.6,326 765.7,323.6 764.5,319.4 762.7,317.2"/>
<polygon class="tn" points="870.1,327.7 865.9,326.1 867.1,323.7 865.2,319.8 868.5,317.6 872.3,315.4 876.6,312.6 878.4,314.1 880.4,320.2 879.5,322.2 879.9,322.8 884.8,324.1 888.5,329.1 885.3,333.4 882.7,334.7 876.4,332.4 873.5,329.1 872.1,328.5"/>
<polygon class="tn" points="956.7,310.8 953.8,313.5 951.4,315.6 949.5,315.3 946.3,316.3 943.8,315.1 941.9,313.5 944.5,306.7 947.1,306.6 948.1,304.7 950.7,302.3 951.8,304.3 955.3,305.5"/>
<polygon class="tn" points="969.7,325 967.1,324.1 965.2,320.7 967.4,319.7 972,319.9 974.3,321.2 979.5,323.9 976.7,327 972.6,325.6"/>
<polygon class="tn" points="720.6,362.4 717.6,365.1 716.3,363 715.6,360.2 717.9,358.8 720.5,358.7 721.3,361.4"/>
<polygon class="tn" points="744.2,392.6 746.2,390.6 740.9,388.7 745.2,387.8 744.2,385 748.4,385.6 745.2,381.9 743.1,377 748.1,375.1 751.5,371.4 757.2,375.2 761.8,375.8 767.7,376.1 768.3,380.1 770.1,381 778.2,379.5 779.8,380.3 781.2,382.4 778.4,386.1 784,387.4 778.3,389.7 781.9,391.4 779.6,392.9 779.8,395 783.4,397 778.8,397.7 781.3,402.9 773.6,400.1 770.1,401 769.8,405 765.5,404.2 763,408.2 754.1,411 752.8,409.2 749.3,404.9 745.7,403.1 746.6,399.1 741.6,398.5 747.2,395.2 746.7,393.8"/>
<polygon class="tn" points="702,405.7 704.1,404.3 709,401 712.1,402.9 715.2,406.2 718.3,408.6 713.9,416.7 716.1,418.1 711.1,422.5 711.8,423.5 709.6,425.1 713.9,430.3 712,431.2 712.6,440.4 706.7,439.3 703.2,443 699.4,441.7 695.7,439.4 694.4,434.4 694.6,431.8 696.2,426.6 695,424.7 695.4,421.8 693.7,419.6 695.9,417.2 699,416.7 699.3,414.4 698.9,406.9"/>
<polygon class="tn" points="820.7,401.8 819.1,399.5 820.4,397.7 821.3,396.6 818.1,394.6 813.3,390.7 819.1,389.1 820.2,387 826.2,386.5 830.8,385.5 833.3,387.9 835.9,390.1 838.7,392.5 841.7,393.6 837.2,396.3 835.2,397.1 836.8,399.3 835.9,400.5 837.6,404.3 833.8,408.5 827.9,408.9 824.5,407.2 820.4,406.2"/>
<polygon class="tn" points="883.5,422.6 883.1,419.3 877.1,419.4 872.5,420 875.1,413.2 877.2,409 876.6,407.2 878.9,403.8 872.6,398.6 873.5,394.6 879.1,393 878.7,389.4 886,391.5 887.1,388 892.7,393.7 894.6,392.1 895.5,397.6 898.1,395.7 898.6,399.3 898.2,401.3 902.2,400.1 911.2,398 917.6,399 918.7,403.8 918.8,408.4 916.9,413 915.7,418.7 912.4,419.9 907.8,422 902.1,418.5 899.2,419.3 895.7,419.1 893.7,414.7 892.2,413.4 889.7,418.6"/>
<polygon class="tn" points="951.7,442.8 953.9,447.1 949.9,449.5 946.8,451 943.1,450.3 942.8,453.2 941.1,456.9 938.4,457.6 935.7,454.5 930.5,456.4 928.5,454.3 922.6,450.9 921.4,449.3 927.3,443.3 927.6,440.6 931.8,439.4 933.1,436.4 934.7,436.2 935.9,432.1 938.2,432.1 940.8,427.7 945.9,425.9 949.4,428.1 949,433.4 952.2,437.9 952.7,440.7"/>
<polygon class="tn" points="757.2,447.2 753.3,448.7 748.2,449.5 744.9,446.6 743.9,443.2 748.8,440.2 750.6,437.6 748.8,434.6 751.9,433.6 753.1,430.5 757,429.8 760.1,430.1 766.3,430.1 765.7,434 768,435.8 775.2,438.4 771.6,441.4 765.1,442.5 762.3,442.9 762.6,444.3 760.6,447.2"/>
<polygon class="tn" points="725.7,454.9 725.1,452.1 724.8,449.7 726.7,449.5 731.1,449.1 729.7,452.8 727.2,455.2"/>
<polygon class="tn" points="663,452.6 659.8,453.6 657.7,447.7 656.7,443.7 656.8,437.6 655.7,436.9 656.5,432.3 658.3,428.8 657.4,426.4 656.8,423.8 655.1,411.6 656.2,408.4 657.7,406.7 661.2,407.7 662.2,415.3 664,414.3 664.9,419.3 664.7,423.5 665.8,426.3 667.2,428.3 667.7,431.5 667.9,436.8 665.6,437.5 664.3,441.2 663.8,445.2"/>
<polygon class="tn" points="666.2,467.5 669,469.1 671.6,472.9 670.5,477.6 666.9,478.3 664.9,479.6 661.9,477.4 661,477.2 657.5,475.5 654.6,472.5 657.4,468.2 659.6,465.9 663.3,469.6"/>
<polygon class="tn" points="854.2,451.1 853.7,456 848.6,457.1 848.1,458.9 847.5,461.1 845.9,464.4 842.6,465.8 838.5,466.6 836.8,460.4 835.7,457.9 835,455.9 839.8,453.3 841.1,453 842.3,451.6 844.6,448 848,447.2 853,447.5"/>
<polygon class="tn" points="775.1,512.1 771.3,512.7 772.1,516.6 768.7,520.1 765.4,516.1 762.5,519.4 758.9,516.2 754.5,516.4 754.2,509.9 755.4,507.1 758.9,502.3 758.2,500.4 757.1,497.5 756.6,494 759.9,491.4 759.6,485.6 765,488.1 767.5,483.6 771.1,486.8 771.6,489.9 773.6,494.1 773.8,496.3 777,498.9 777.5,500.7 779.3,505.2 775.2,507.4"/>
<polygon class="tn" points="894.6,486.5 898.5,486.4 901.7,488.1 902.2,492.7 903.8,495.4 900.7,498.4 901.2,500.9 900,503.8 897.7,504.1 895,505.5 894.9,509.8 892.7,512.7 889.1,512.9 884.9,515.6 881,509.2 878.6,508.1 881.9,502.9 880.6,500.6 878.4,497.7 880.8,496.8 884,495.6 879,489.6 880.6,486.6 885.5,485.4 889.8,486.5 891.8,484.8"/>
<polygon class="tn" points="813.6,518 811.8,520.3 809.5,517 807.5,515.2 807.1,513.5 808.9,509.3 811.3,511.1 813.3,511.9 815.8,512.9 815.6,515.3"/>
<polygon class="tn" points="851.8,523.7 849,526.3 846.5,525.6 845.7,521.2 845.2,517.1 843.7,514.7 845.4,510.7 847.2,508.9 850.4,508.4 854.3,506.7 856.3,511 855,513.9 852,517.2 853.4,522.8"/>
<polygon class="tn" points="955.7,499.8 953.7,497 953,495.5 952,492.5 957.3,490.5 959.3,491.8 959.8,495.8 959.6,497.5"/>
<polygon class="tn" points="965.4,492.9 968,488.7 971.2,489.1 970.5,492.3 971.7,495 968.4,496.8 967.2,493.8"/>
<polygon class="tn" points="962.4,523.1 961.2,525.9 964.4,527.6 965.4,529.2 970.5,530.4 969.2,533.1 964.9,535 958.6,535 958.1,536.3 961.4,541.3 962.5,546.2 955.3,545.6 948.6,545.6 946.9,543.7 942.2,544.7 939.8,540.5 940.9,537.7 942.5,534.5 938.7,533.7 938,533.1 935.3,531.3 930.1,526.2 930.3,523.2 934.9,522.5 941.2,522.6 944.6,521.4 949.8,520.4 954.3,520.7 959.8,520.8"/>
<polygon class="tn" points="677.3,541.1 676.2,535.7 673.6,531.8 674.6,528.4 675.7,523.9 674.8,522.4 679.9,519.1 676.9,515.5 680.7,516.2 679.4,510.7 679.9,502.9 682.7,503.6 687,508.5 690,508.8 691.4,506.6 694.8,505.5 701.5,504 703.7,508.2 702.8,514.8 700.9,517.8 701,521.5 701,524.9 700.1,527.2 694,527.2 692,526.3 691.3,527.2 692.4,536.3 689.5,543.1 685,543.4 682.8,538.9"/>
<polygon class="tn" points="654.8,560 654,557.3 654.6,552.3 655.7,551 660,548.4 661.4,552.1 666.9,552.1 667.3,554.9 663.6,559.2 661.2,558.7 658.6,560.6"/>
<polygon class="tn" points="674,582.6 678.2,582.9 679,580.6 682.9,576.6 685.2,580.3 686,584.3 685.7,587.7 683,588.3 684.4,594.8 681.9,597.8 678.6,597.2 677.6,593.3 676.2,590.9 675.2,587.6"/>
<polygon class="tn" points="741.1,575.2 737.8,575.3 736.5,572.5 728.8,572.2 728.9,570.4 726.1,565.8 728,563.1 734.4,562.1 739.9,564.5 740.7,564.4 742.4,563.1 751.1,559 753.2,560.8 751.9,565.9 752.7,569.6 751.5,571.2 744.8,571.3 745.5,573.9"/>
<polygon class="tn" points="784,585.7 787,586.3 786.3,588 789.3,590.3 789.8,592.7 790.8,595.7 787.7,597.9 780.4,597.1 776.5,599.5 773.5,599.1 772.7,593.5 772.8,592.3 772.3,589.7 774.5,588.5 773.2,587 773.1,580.6 775.1,579.6 780.5,579.4"/>
<polygon class="tn" points="33,605.1 30.2,602.3 35.1,601.2 37,602.5 39.3,603.6 37.5,606.5 33.6,606.1"/>
<polygon class="tn" points="77.6,625.9 77.9,623.6 81.5,621.7 82.9,622.8 88.2,622.7 87.1,625.3 81.5,627.1"/>
<polygon class="tn" points="119.5,602.6 122.4,602.7 125.8,601.7 128,604 129.1,608.3 124.7,609 122,609.3 118.6,609.5 114.9,607.5 119.4,604.8"/>
<polygon class="tn" points="36.4,642.5 41.3,641 46.2,649.5 48.7,654.6 50,656.3 53.2,658.4 51.1,663.9 46.2,667.4 51.5,667.1 52.5,669.7 53.2,672.4 53.7,673.7 60.6,677.3 58.7,681.2 57.9,684.2 60.9,691 58.6,696.5 52.5,698.4 48.4,698.4 42.2,701.8 34.6,691.8 31.1,690.6 28.2,689.5 28.4,684.5 20.4,687.4 16.3,687.1 19.9,679.8 17.4,679.7 21,675 17.7,674.3 13.1,672.2 14.8,668.4 13.7,665.6 13.9,663.1 14.1,657.6 18.1,656.2 19.9,652.1 23.9,651.3 27.7,649.9 32.5,641.3"/>
<polygon class="tn" points="22,740.8 26.1,745.8 24,748.8 23.8,750.4 22,752.6 19.9,756.6 14.9,755.4 11.2,752.3 11.7,749 13.2,747 13.3,745 16.7,744.8 18,742.3"/>
<polygon class="tn" points="42.4,792.7 39.7,793.2 36.1,790.3 35.8,787.4 40.5,787.1 42.5,783.2 45.6,786.3 45.2,788.6 44.5,790.4"/>
<polygon class="tn" points="117.3,764.7 121.5,760.7 126.2,761 125.9,769.4 127.1,771.4 125,774.1 127.3,777.3 124,777.1 123.1,779.1 125.7,786.8 123.9,790.1 118.5,789.2 113.8,785.8 113.2,783.4 111.6,780.8 110.6,778.9 110.8,775.9 110.5,774.2 107.7,769.5 107.2,766.1 112.2,764.5 115,764.9"/>
<polygon class="tn" points="8.7,803.8 9.7,807.2 11,813 9.3,815.8 6.4,813.1 3.7,813.9 1.7,812.2 0.4,808.8 3.2,806 4.9,803 7.4,803.9"/>
<polygon class="tn" points="51.3,850.7 51.1,848.6 53,846.1 56.9,845 57.4,840.4 59.9,838.1 66.5,838.8 65.9,844.9 64.3,848.9 68,850.6 68.3,852.7 67.2,856.2 66.2,859.3 61.4,861.1 57.6,858.8 55.2,857.1 51.7,856.7"/>
<polygon class="tn" points="153.7,887.3 159,888 157,889.6 164.8,893.6 163.9,896 159.6,897 150.9,896.5 148.4,895.1 143.2,894.7 142.8,892.3 137.9,893.7 138.1,891.9 129.9,893.5 129.1,892 120.6,890.6 120.3,887.5 126.5,884.1 129.4,883.7 135.5,883 136.8,881.6 141.9,880.5 146,879.7 147.8,881.2 152.1,881.4 156.2,882.2 156.1,884.6"/>
<polygon class="tn" points="17.4,896.3 14.2,898.3 12,896.1 11.6,893 11,889.4 14.3,888.1 17.3,890.8 18.2,892.7"/>
<polygon class="tn" points="153.3,723.1 150.3,725.2 146.3,726.1 140.6,725.3 138.7,722.8 136.4,721.7 134.8,719.8 131.7,718.3 132.7,715.9 135,714.3 135.6,711.8 140,710.5 140.6,708.4 145.9,708.8 150.3,710 149.6,713.2 151.5,715.6 150.3,716.8 151.4,718.7"/>
<polygon class="tn" points="173.3,718.5 174.4,721.9 176,726.6 175.3,728.7 170.5,727 169.2,725.9 168.1,723.8 169.2,720.2"/>
<polygon class="tn" points="177.6,765.4 178.6,770.1 176.8,772.4 176.5,778.5 173.6,783.7 171,783 168.8,781.4 167.4,775 169,765.5 169.5,763 167.6,761.5 169,758.3 169.8,757.4 169.2,752.9 168.1,746.9 170.4,742.8 171.6,742.1 173.8,741.3 175.6,744.6 179.6,739.1 180.6,744 181.9,748.1 181.5,754.2 179.3,759.4 178.5,761.2 179.6,765.1"/>
<polygon class="tn" points="198.9,799.7 198.8,793.9 202.1,789 206.2,789.4 207.2,794 209.9,796.8 209.2,801.8 210.7,805.8 208.7,807.3 207.6,810.7 204,811 202.5,811.4 200.6,811.1 197.2,814.7 192.3,817.5 189.6,814 188.3,811.5 188.6,805.6 192.6,800.7 195.7,800.4 197.2,798.2"/>
<polygon class="tn" points="187,619.8 183.2,618.2 182.4,618.2 179,623.6 176.1,622.9 173.7,621.4 170.1,619.3 170.8,614.4 176.9,611.5 175.2,607 177.8,606.3 180.6,603.1 183,605.3 185.9,606.8 186.8,607.8 189.1,610.7 193.2,614.2 191.4,619.6"/>
<polygon class="tn" points="223.6,636.6 223,632.9 229.7,635.3 232.6,633 234.8,635.2 238.2,636.1 237.9,638.4 237.6,640.9 242.7,642.4 244.9,646.3 241.2,649.1 241.4,652.7 235.2,654.2 231.3,651.2 229.2,648.2 229.2,646.2 224.1,648.1 220.5,645.9 221.1,642.3 219.6,638.5"/>
<polygon class="tn" points="256.7,658.6 259.1,654.3 263.6,657.1 262.3,662.1 264.9,664 264.6,668 263.5,671.6 259,671 257.2,668.5 253.3,669.8 253.4,664.8 254,663.5 256.3,660.7"/>
<polygon class="tn" points="275.9,665 278.7,662.4 282.5,658.7 285.9,661.2 286.6,664.9 286.3,666 286.2,670.4 285.2,675.1 281.9,674.8 279.2,669.2 279.6,667.4"/>
<polygon class="tn" points="291.8,610.7 294.2,611.2 297.3,613.1 299.2,616 300.3,620.7 299.4,623.8 293.4,621.9 291.7,622.2 289.6,624.3 285.5,621.6 285.2,616.3 287.8,615.8 289.5,613.7"/>
<polygon class="tn" points="318.2,622.5 322,622.3 323.4,626.9 318.4,629.5 316.3,629.1 314.5,631.3 312,628.7 311.1,622.5 314.4,621.1 315.7,621.2"/>
<polygon class="tn" points="255.6,746.2 256.5,742.8 259.9,742.5 261.8,741.9 261.9,738.5 265,735.9 268,729.5 271.2,732.3 271.6,739.9 274.1,738.7 274.2,744.8 276.2,743.5 281.9,743.3 286.2,744.7 289,749.5 285.4,754.1 288.9,758.9 286.1,764.3 283.1,765.4 279.9,770.4 272.2,762.7 272.4,767.3 269.4,764.7 267.9,759.8 265,764.4 262.2,767.8 255.8,772.9 251.5,769.6 250.6,767.1 251.9,761.9 252.5,755 250.4,752.9 250.4,749.1"/>
<polygon class="tn" points="275.3,797.3 273.1,792.2 274.6,790.3 274.7,783.2 277,784.5 279.7,785.1 280.2,790.3 280.7,794.6 279,796.3 277.6,798.2"/>
<polygon class="tn" points="234.8,809 232.6,805.3 234.9,805.3 238.1,805.8 239.3,807.6 237.5,812.8 235.8,811.3"/>
<polygon class="tn" points="260.4,850.7 258.6,846.3 257.1,843.2 256.2,841.9 255.5,836.8 257,836.1 259.1,835.3 262.7,834.8 264.1,838.1 265.2,839.4 263.9,843.2 264,846.5"/>
<polygon class="tn" points="371.8,609.8 372.6,607.9 370.4,605.4 372.3,601 378.2,602 380,602.6 385,603.4 386.1,605.7 384.5,610 381.1,610.8 381.6,613.2 380.6,615.3 374.5,617.1 372.1,616.6 370.2,612.3"/>
<polygon class="tn" points="386,626.8 384.9,623.1 388.1,621.8 390.6,623.3 391.4,625.3 391.2,628.1 388.3,629.3"/>
<polygon class="tn" points="372.9,639.7 374.3,636.6 376.8,637.5 380.3,639.1 379.7,644.6 376.6,646.2 374.5,643.7 369.4,644.6 368.9,641.2"/>
<polygon class="tn" points="329,679.8 326.5,674.9 326.8,672.7 326.5,667.3 329.2,664.2 330.4,662.7 331.1,661.8 333.6,663.3 333.9,666.5 334.2,671 334,673.2 333.2,679 331.6,678.1 330.4,678.5"/>
<polygon class="tn" points="336.2,740.7 334.1,737.3 333.4,736.2 331.4,735.8 329.9,735.1 328.5,732.1 326.7,729.8 327.4,723.4 328.9,720.6 331,717.8 330.9,714.8 331.7,713.3 332.3,707.7 333,701.2 336.2,700.7 337.6,700.4 339.8,706.4 339.8,710.5 338.3,718.5 339.4,719.6 341,723.4 340.4,725.7 341,731.2 341.5,736.8 340.2,741.8 337.8,741.9"/>
<polygon class="tn" points="367.1,738 369.7,739.8 368.4,742.5 367.5,745.3 365.6,744.7 364.3,742.5 365.8,740.6"/>
<polygon class="tn" points="455.2,663.5 455.8,664.8 463.8,666 466.6,667.3 462.4,673.1 461.5,675.3 457.3,675.9 456.1,679.1 454,681.1 450.8,679.4 449.4,682.9 443.5,683.7 441.8,683.3 438.8,681 434.3,679.6 433.8,674.3 432.4,672 433.3,668.8 436.8,665.5 440.7,665.3 445.2,666 446.2,665.7 449,662.4 452.3,661"/>
<polygon class="tn" points="511.8,635.6 507.4,638.5 505.8,638.1 502.4,635.1 504.4,632.4 502.2,629.1 502.5,626.7 505.6,623 509.7,626.6 512.6,628.8 513.8,630.5 513.6,635.1"/>
<polygon class="tn" points="596.7,629.5 595.7,631.2 597.2,633.2 598.3,637.2 597.4,642.1 595.3,648.6 590.8,649.4 587.9,646.9 586.3,642.1 587.7,634.7 588.2,633 585.3,632.2 584.5,629.9 584,626.3 583.6,622.9 585.3,619 588.2,616.9 590.5,619 594.3,615.4 595.9,618.9 600.3,618 601.9,623"/>
<polygon class="tn" points="610.2,656.6 607.2,655.5 610.3,652.7 610,650.4 606.2,648.1 610.5,644.8 613.7,643.8 619.9,644.5 624,645 623.9,649.5 625.5,650.9 629.9,650.8 633.7,654.3 636,656.2 630.5,657.4 625.5,660.1 620.7,658 617.6,657.5 614.2,657.6"/>
<polygon class="tn" points="650.4,681.6 648.4,685.8 646,687.9 642,684.4 639.4,683.7 638.8,679.9 637.1,675.6 642.7,675.2 643.9,674.5 646.8,676.7 649.3,678.4"/>
<polygon class="tn" points="555.1,672.5 558.6,669.3 561.8,670.3 564.6,670.3 564.2,673.4 561.3,676.2 558.5,678.2 557.1,673.8"/>
<polygon class="tn" points="634.7,712.7 633.7,711.8 631.4,710.3 628.2,705.9 631.6,703.4 633.5,703.9 636.1,704.3 639.6,705.6 642.1,707.2 642.8,710.5 642,713.2 638.1,715.2"/>
<polygon class="tn" points="572.2,757.3 567,749 566,746 564.2,737.2 559.5,736.5 561.4,732.8 553.8,734.1 547.1,730.7 556.2,725.2 553.7,720 546.6,717.8 547.5,713.9 549.4,707.1 555.3,706.5 551,697.7 556.3,695 560.9,697.1 567.8,698.6 569.5,696.6 574.8,691.2 578.4,684.6 583.4,690.9 591.3,684.2 593.1,691.3 600.2,692.3 593.4,705.5 593.7,709.1 597.7,710.7 595.9,713.8 599.2,717.3 599.9,722.3 598.1,725.2 600.2,728.8 595.4,731.5 596.6,738.1 593.6,739.4 595.2,753.5 587.5,751.6 586.9,757.2 581.2,759.7"/>
<polygon class="tn" points="388.7,813.1 391.6,807 392.1,805.4 389.7,803.1 389.9,797.3 392.3,793.7 395.7,793.4 398.2,796.2 401.2,800.4 401.4,801.7 400.5,805.8 398.4,808.3 398.2,814.8 396.5,813.2 391.6,817.1"/>
<polygon class="tn" points="330.8,828.4 333.5,825 335,824.9 341.6,822.7 344.4,825.1 343.2,828.3 340.3,832.1 340.6,833.4 338.6,836.2 337.8,840.6 331.6,837.4 331.8,833.6 331.1,832.1 331.4,830.4"/>
<polygon class="tn" points="705.1,603 711.1,605.2 709.7,608.5 706.4,608.8 701.1,610.7 701.9,607.1 704.2,606.4"/>
<polygon class="tn" points="720.7,613.5 716.8,610.9 716.1,609.2 715.8,605.4 719.7,605.6 723.3,607.3 720.1,610"/>
<polygon class="tn" points="719.7,632 716.5,633.4 713.7,629.3 712.9,626.6 712.4,624.3 715,623.6 717.5,619.5 723.1,623.5 723.2,625.2 720.6,627.7"/>
<polygon class="tn" points="729.1,630.2 732.8,629.6 736,628.8 738.5,624.6 741.1,624.8 746,625.5 749.9,625.5 748,631.3 743.6,633.6 744.5,636 746.1,641.7 742.2,642.7 739.6,643.5 736.3,642.5 733,640.2 733.3,636 728.7,635.1"/>
<polygon class="tn" points="765.3,605.7 767.8,602.9 772.1,601.3 773.5,604.7 778.7,604.5 776.5,608.8 779.1,609.2 779.3,611.9 782.4,617 780,618.9 777.1,621.2 773.7,620.7 768.5,618.5 766.5,617.3 764.5,615.9 757.4,615.3 756.1,612.1 759.4,609.8 761.8,606.9"/>
<polygon class="tn" points="692.8,679.6 691.4,674.1 690.8,670.4 691.4,668.4 689.3,663.7 692,661.4 696.2,663.8 698.5,663.1 700.9,666.7 702.5,667.6 703.9,671.3 701.7,674.1 698.6,675 695.9,680.4"/>
<polygon class="tn" points="790.6,685.8 789.6,690.4 782.6,691.7 782.2,693.3 781.2,695.8 779.9,696.9 776.8,698 772.1,699.6 768.9,697.2 767.7,694.5 767.6,690.7 769.1,688.6 769.1,686.4 772.5,685.3 775.8,684.8 778.4,683.3 779.9,682.9 783.8,681.4 788.3,683.8"/>
<polygon class="tn" points="709.2,733.7 707.8,730.4 710.7,729.8 715.6,728.8 715.7,731.4 714.5,733.2 715.6,736.4 709.7,735.2"/>
<polygon class="tn" points="746.9,740.5 746.7,746.7 742.8,746.1 740.6,743.9 738.8,742.7 735.2,742.3 736.3,737.9 737.1,734.6 740.9,732.4 743.8,735.9 743.6,739.6"/>
<polygon class="tn" points="676.9,761.3 672.1,759.5 669.2,755.5 665.3,756.1 664.2,755.1 663.3,751.5 662,750.7 659.9,749.2 651,745 652,742.5 653.7,739.1 661.3,737.9 664.4,737.3 667.6,740.1 670.6,742.1 671.5,743.8 672.3,744.1 679.4,741.7 684.9,743.7 682.2,746.5 683.3,750.4 680.3,752.4 681.7,756.8 680.1,758.4"/>
<polygon class="tn" points="678.2,783.9 682.5,786.1 684.7,785.3 689.1,784.5 690.4,786.6 693.5,786.9 699.2,789.9 699.6,791.7 698.1,795.5 693.5,797.3 693.3,800.2 688.3,801.9 682.7,798.5 681.5,798.8 678.8,797.3 676.3,796.6 675.7,794.4 669.1,793.2 667.4,791.2 664.7,787.3 667.1,784.3 672.5,783.3"/>
<polygon class="tn" points="719.7,823 719.5,821.4 718.1,810.5 719.6,809.5 723.9,811.1 725,816.9 726.2,817.8 726.2,822.3 727.2,824.3 726.7,827.7 726.3,831 723.5,831.9 721.8,836 720,838.7 716.6,835.7 718,826.6 718.4,825.4"/>
<polygon class="tn" points="811.9,652.1 812.1,646.7 813,644.9 817.6,643.8 824.8,645.2 825.6,642.9 826.8,638.2 830.2,635.8 831.9,638.2 837,635.9 837.4,639.8 839.8,642 843.7,643.8 847.5,644.8 848,646.9 847.9,650.3 849,653.7 850.1,656.3 847,658.7 850,666.8 847.8,668.9 844.9,671 836.6,664.5 832.4,661.5 830.7,659.2 829.4,661.5 826.6,663 821.5,664.8 816.7,664.3 818.4,658.6 811,657.6 811.6,654.7"/>
<polygon class="tn" points="880.8,689.9 879.2,686.9 876.8,684.9 878.4,682 876.3,679.1 873.8,674.1 875.7,672.3 882.5,673.2 884.9,672.8 887.3,674.5 889.3,674.4 890.8,676.7 894.7,676.5 899.3,679.1 899.6,682.2 893.9,685.9 892,688.1 890.5,688.8 889.1,692.3 884.6,688.7"/>
<polygon class="tn" points="921.5,687.4 927.2,686.7 931.8,687.1 927.6,689.7 926.6,691.9 922.6,691.5 921.1,689.5"/>
<polygon class="tn" points="968.6,713.8 970.3,711.6 971.7,708.1 974.2,711.1 975,716.6 975.4,721.7 974.7,726.6 974,731.9 974.2,733 977.4,736.2 978.3,741.4 977.2,749.7 976.3,751.8 974.2,750.8 972.3,753.6 971.2,749.6 970.6,749.4 969,749.7 967.4,747.3 967.6,739.8 967.7,735.7 969.3,732.9 968.7,729.1 968.6,726 969,723.4"/>
<polygon class="tn" points="832.1,758.4 833.2,755.5 835.9,754.1 839.5,754.8 838.3,757.6 835.2,760 833.2,760.8"/>
<polygon class="tn" points="898.9,804.4 900.4,802.6 904.1,806.3 902.6,810 900.3,810.6 896,811 895.5,808.6"/>
<polygon class="tn" points="214.5,418.8 201.4,427.8 207.2,438.4 208,452.3 214.5,450.7 220.2,456.4 220.2,462.9 230,469.4 233.3,479.2 219.4,489.9 225.1,495.6 208,511.1 212.1,513.6 226.8,498 247.2,494 250.5,485.8 266.5,484.2 270.1,461.3 255.4,444.9 252.1,445.8"/>
<polygon class="tn" points="231.7,400 237.4,404.1 231.7,411.4 243.9,418 246.4,422.9 243.9,426.1 250.5,427 254.5,419.6 261.9,424.5 264.3,421.2 255.4,411.4 252.1,404.9 246.4,400"/>
<polygon class="tn" points="349.6,83 352.2,81.2 360.2,88.3 362,82.1 368.2,83.9 371.8,82.1 380.7,88.3 386.9,85.7 389.6,75 392.5,78 394.5,92 393,104 388,114 383.5,119 384,128 386.9,140.8 384.2,149.7 388.7,155 386.9,158.6 378.9,153.2 374.4,146.1 377.1,136.3 373.6,133.7 366.4,127.4 368.2,117.7 364.7,107 359.3,98.1 353.1,96.3"/>
<polygon class="tn" points="322,147 326.4,143.4 328.2,146.1 336.2,147 338.9,143.4 342.4,144.3 351.3,153.2 354.9,154.1 355.8,159.4 359.3,163 352.2,166.6 348.7,171.9 342.4,167.4 341.6,160.3 343.3,155.9 337.1,153.2 333.6,156.8 331.8,153.2 322,150.6"/>
<polygon class="tn" points="356.7,172.8 372.7,169.2 373.6,172.8 366.4,176.3 367.3,183.4 372.7,185.2 371.8,190.6 368.2,192.3 369.1,197.7 364.7,194.1 361.1,190.6 358.4,194.1 353.1,192.3 347.8,186.1 357.6,185.2 359.3,178.1"/>
<polygon class="tn" points="286,146.5 290,145.2 296.2,144.3 299.8,147.9 298,158.6 299.8,165.7 290,162.1 285,160"/>
<polygon class="tn" points="311.3,193.2 314.9,192.3 320.2,197.7 319.3,206.6 314.9,211.9 311.3,199.4"/>
<polygon class="tn" points="328.2,208.3 332.7,206.6 339.8,211.9 340.7,220.8 334.4,221.7 330,215.4"/>
<polygon class="tn" points="477.2,171.7 471.9,167.2 462.9,177.4 469,183.5 469.4,188.8 475.5,193.3 472.7,197 467,191.7 465.3,194.1 467.8,196.6 478.4,201.1 482.5,204.7 492.3,207.2 493.1,211.3 486.6,212.9 482.5,208.4 485.8,206 493.9,207.2 496.8,200.7 489.4,192.5 493.1,187.2 494.7,183.5 493.5,180.2 487.4,180.2 487,186.8 484.5,192.9 481.7,190"/>
<polygon class="tn" points="589.3,335.6 596.4,335.6 596.9,331.6 605.3,331.1 612.4,334.7 614.2,340.9 619.1,343.6 614.2,350.7 617.8,355.1 614.7,359.1 617.8,365.3 606.2,368.4 600,366 603,356 598,347 592,341"/>
<polygon class="tn" points="793.5,345.1 788.2,346.7 786.9,349.6 787.8,352.5 791.4,353.7 790.6,358.2 794.7,361 789.4,365.9 792.3,368.8 795.5,365.1 800,363.1 803.7,365.5 804.5,359.8 807,359 811.9,361 820,366.8 823.3,364.3 825.3,359.4 822.5,358.2 824.5,354.5 815,352 806,349 799,346"/>
<polygon class="tn" points="856.9,135.4 875.7,117.1 890.4,116.6 893.2,110.2 896.9,110.2 905.1,117.1 908.8,122.6 913.4,129 918.9,132.7 913.4,141 908.8,142.3 901.5,141.4 893.2,141.4 883.1,142.3 872.1,147.4 858.7,148.3 858.3,139.1"/>
<polyline class="bd" points="296.7,362.9 305.3,358.6 310.8,363.5 316.3,358 326.1,354.9 335.9,355.5 342.6,351.3"/>
<polyline class="bd" points="333.5,398.5 331,405.8 328.5,408.9"/>
<polyline class="bd" points="300.4,422.4 316.3,424.2 321.2,419.3 324.9,418.1"/>
<polyline class="bd" points="302.7,243.9 310.1,248.2 318.6,262.9 326,273.9 330.9,281.3 327.2,284.4 333.4,287.4 337,298.5 344.4,296.6 354.2,300.9"/>
<polyline class="bd" points="267.2,293.5 278.8,302.1 281.9,299.1 289.2,305.8 301.5,310.1 319.9,313.8 328.4,320.5 343.2,325.4 348.7,325.4"/>
<polyline class="bd" points="379,258 388,261 394,269 407,280 419,293 442,302 448,313 452,327 462,328 475,335 506,345 520,337 533.3,326.7 542,324.7"/>
<polyline class="bd" points="425,214 416,247 409,280"/>
<polyline class="bd" points="442,302 470,278"/>
<polyline class="bd" points="506,344.7 496,366.7 485.3,381.3 496,386.7 506.7,396 516,400 518.7,398 525.3,398 530.7,406.7 542.7,412.7"/>
<polyline class="bd" points="485.3,381.3 480,385.3"/>
<polyline class="bd" points="399,286 395,302 376,315 368,320"/>
<polyline class="bd" points="395.7,290 393.5,303 384.1,310.2 374,313.1 372.6,316.7"/>
<polyline class="bd" points="384.1,316 392.8,327.6 398.6,332.6 389.9,333.4 385.6,336"/>
<polyline class="bd" points="369.7,336.2 382.7,326.1 388.5,322.5"/>
<polyline class="bd" points="415.9,290 427.5,297.2 442.7,303"/>
<polyline class="bd" points="460.7,382.5 456.4,388.3 455,394 450.6,401.3 455,407.1 453.5,412.8 460.7,418.6 466,420 453,428 462,441 461,446 465,450 464,456 475,462 486,472 487,479"/>
<polyline class="bd" points="457,380 458,389 452,396 450,402"/>
<polyline class="bd" points="453,428 439,435 430,428 423,433 425,441 422,443 418,436 412,434"/>
<polyline class="bd" points="542,413 533,423"/>
<polyline class="bd" points="505,458 527,477 518,488 506,492 497,488 491,492 484,487"/>
<polyline class="bd" points="527,446 542,438 560,447 560,454 544,463 533,456 527,446"/>
<polyline class="bd" points="335,355 342.2,350.7 343.7,354.3"/>
<polyline class="bd" points="342.2,340.6 346.6,350.7 353.8,352.1 362.5,350"/>
<polyline class="bd" points="333.5,398.5 340.8,403.4 348.2,409.5 353.1,415.6 355.5,421.7"/>
<polyline class="bd" points="326,400 340,402 349,405 356,422"/>
<polyline class="rv" points="386,0 384,10 393,27 401,37 404,50 401,67 398,83 396,100 393,117 388,133 388,147 393,160 398,173 401,182 396,193 388,207 383,220 381,233 379,250 376,267 371,283 369.7,290 369,297.2 363.9,308.8 359.6,317.5 358.1,327.6 358.8,336.2 361.7,344.9 368.2,352.1 376.2,360.8 378.4,368 377.6,378.2 372.6,383.9 368.2,394 366.1,405.6 363.2,420 361,423 359,436 357,450 353,459 347,467 340,470 326,470 307,477 290,490 285,497 280,507 278,527 273,553 263,573 253,590 250,600 255,620 247,653 233,687 222,710 217,733 215,757 218,787 223,813 228.3,835 232.3,845.6 248.2,869.5 268.1,888.1 281.4,900"/>
<polyline class="rv" points="428,0 433,13 435,33 434,60 433,87 429,113 424,133 421,147 418,160 413,173 406,187 398,200 389,213 384,227 381,240"/>
<polyline class="rv" points="377.6,378.2 384.1,382.5 390.6,389.7 394.2,399.8 395.7,409.9 397.1,420 400,425 405,438 410,450 413,463 412,474 407,481 403,488 397,497 393,506 385,513 376,522 368,531 362,542 358,555 352,569 345,580 320,605 305,635 295,665 287,695 282,725 277,750 285,780 300,805 317,817 319,828 316,835 312,843 289.4,857.6 284,865.5 283.4,881.5 289.4,890.8 300,898.7"/>
<polyline class="rv" points="893,0 891,27 890,50 894,60 892,100 885,117 889,133 899,153 905,177 907,200 910,233 915,263 929,280 952,300 957,307 959,317 965,322 979,323"/>
<polyline class="rv" points="670,633 665,642 652,647 636,662 626,672 619,668 613,677 603,675 593,672 589,680 583,680 574,670 563,667 553,672 543,682 529,700 518,709 499,712 493,718 493,733 499,757 506,773 501,797 506,813 508,830 514,840 525,853 535,870 545,885 560,900"/>
<polyline class="rv" points="251.5,0 257.2,4.3 268.6,6.3 277.2,2.9 280,0"/>
<polyline class="rd" points="30,31 50,39 72,47 85,53 110,72 125,90 137,107 140,113 142,132 148,142 158,150 173,167 182,171 200,173 217,183 238,193 248,184 257,191 277,200 305,217 308.8,220 316.2,226.1 328.4,237.2 335.8,244.5 340.7,253.1 343,262 345.6,272.7 354.2,282.5 362,285.5 371,288"/>
<polyline class="rd" points="373,0 381,13 396,40 397,60 396,83 397,100 384,117 384,133 388,147 381,160 379,180 376,193 369,209 364,225 362,238 364,252 361,265 358,277 356,286 354,290 353.5,304.5 354.5,316 356,327.6 358.1,337.7 362.5,345.6 369.7,352.1 376.9,359.4"/>
<polyline class="rd" points="356.7,290 356.4,304 357.4,316"/>
<polyline class="rd" points="439,0 439,20 438,50 436,83 433,117 431,140 429,160 428,178 424,180 416,187 405,199 397,211 392,223 390,238 388,254 386,270 379,282 378.4,290 374,304.5 369.7,316 367.5,323.2 366.8,333.4 369,339.1 372.6,343.5 374,346.4"/>
<polyline class="rd" points="474,0 473,13 459,40 454,53 456,67 466,93 469,107 463,123 456,140 456,153 461,167 462,180 463,189 459,200 450,211 441,218"/>
<polyline class="rd" points="371,288 372.6,290 378.4,297.2 394.2,311 402.9,318.9 408.7,326.1 412.3,334.8 413,343.5 411.6,352.1 407.3,360.8 402.9,368 397.1,371.6 389.9,373.5 378.4,373.8 366.8,373.5"/>
<polyline class="rd" points="367.5,334.1 378.4,324.7 394.2,311 402.9,303 407.3,295.8 412,286 433,264"/>
<polyline class="rd" points="362.5,345.6 372.6,341.3 385.6,336 413,335.1 434.7,331.9 450.6,328.7 475,323.5 484,321 506,311 527,291 546,270 566,247 568,230 586,225 606,218 626,210 652,214 659,207 662,190 672,177 695,172 705,167 707,157 717,147 735,148 762,151 785,149 809,145 832,140 850,137.7 878.5,129.5 881.3,127.2 891.4,127.6 900.1,129.9 912.5,129.5 914.3,126.7 921.7,126.3 940,117.1 952,112 979,100"/>
<polyline class="rd" points="434.7,331.9 436.2,337.7 439,343.5 444.8,347.1 457.8,349.2 475,352.1 480,353.3 493.3,352.7 506.7,353.3 520,356 533.3,360 544,365.3 554.7,369.3 566.7,374 580,379.3 600,380 610,386.7 620,395 627,401.5 630,400.4 640.4,400.4 648.6,401 655.8,407 666,415.8 675,423 683.3,426 690.5,422.4 695.6,424.4 701.7,423.4 706.8,415.8 720,411 740,402 760,399 780,399 795,399 806,398 815,396 822,386 832,381 862,379 880,391 893,400 905,393 915,404 925,418 937,432 947,438 952,428 962,412 972,408 979,407"/>
<polyline class="rd" points="362.5,345.6 371.1,350.7 382.7,355.8 402.9,365.1 427.5,377.4 440.5,386.1 453.5,394.8 475,408.5 497,419 520,431 539,442 559,453 579,463 593,470 603,473 613,477 626,488 639,500 652,511 685,537 719,558.5 752,581 772,594.5 785,610.5 806,627 835.7,628.6 859,643 885,667 919,683 952,693 979,702"/>
<polyline class="rd" points="806,627 814.4,634.4 829.1,643.4 838.9,650.7 848.7,649.9 860,658 869,667 895,693 935,717 962,728 979,733"/>
<polyline class="rd" points="427.5,377.4 444.8,380.3 459.3,382.5 465,383.9 475,389.7 479,391 497,398 506,407 515,420 520,428"/>
<polyline class="rd" points="402.9,368 407.3,376.7 415.9,388.3 427.5,399.8 439,411.4 449.2,420 453.5,427.5"/>
<polyline class="rd" points="427.5,377.4 420.3,385.4 410.1,396.2 399.3,407.1"/>
<polyline class="rd" points="376.9,359.4 381.2,370.9 387,379.6 392.8,388.3 397.1,399.8 399.3,407.1 400.8,414.3 404.4,420 414,444 419,460 428,477 440,495 448,508 451,530 455,552 458,563 470,580 483,598 499.3,621.7 512.7,638.3 539.3,671.7 546,681.7 559.3,695 572.7,706 592.7,711.7 609.3,726.7 626,740 639.3,753.3 646,766.7 652,773.3 685.3,803.3 712,826.7 720.3,840 738.7,863.3 765.3,896.7 768,900"/>
<polyline class="rd" points="458,563 462,570 478,592"/>
<polyline class="rd" points="352.3,316.7 358.1,316 369,321.1"/>
<polyline class="rd" points="352.3,316.7 345.1,323.2 341.5,330.5 341.5,347.8 343.7,354.3 353.8,360.8 362.5,362.3 369,365.1 376.9,359.4"/>
<polyline class="rd" points="369,365.1 366.1,372.4 365.3,388.3 363.9,396.9 359.6,399.8 358.1,409.9 356,420"/>
<polyline class="rd" points="362.5,345.6 364.6,350.7 365.3,357.9 362.5,362.3"/>
<polyline class="rd" points="0,328 12,330 27,340 37,343 83,342 93,337 107,339 118,342 133,352 140,352 167,345 180,350 190,362 203,365 220,375 233,382 247,386 255,383.7 273.4,383.1 279.5,382.5 296.7,381.9 305.3,379.4 311.4,379.4 313.8,385 318.7,392.3 323.6,395.4 328.5,395.4 334.7,393.5 340.8,390.5 343.3,387.4 353.1,388.6 364.1,390.5"/>
<polyline class="rd" points="328.5,395.4 327.3,388.6 329.8,382.5 338.4,369 343.3,360.5 343.9,354.3"/>
<polyline class="rd" points="328.5,395.4 326.1,398.5 326.7,403.4 318.7,405.8 320,407.6 328.5,408.9 327.9,413.2 324.9,420.5 321.2,426.6 315.1,430"/>
<polyline class="rd" points="0,697 10,688 33,672 67,643 90,620 113,600 133,573 153,550 173,538 197.4,520 206.3,509.5 212.1,507 221,508.7 232.5,504.6 245.6,500.5 255.4,498 261.9,496.4 265.2,493.1 266.8,486.6 266.5,476.8 265.5,468.6 270.1,463.7 275,453.9 283.1,445.8 291.3,438.4 302.7,437.6 314.2,431 315.1,430"/>
<polyline class="rd" points="266.5,484.2 275,481.7 283.1,477.6 286.4,480.1 291.3,480.9 296.2,476.8 302.7,471.9 314.2,468.6 325.6,462.1 337.1,455.6 350,448.2 356.3,441.7 356,430 355.6,420"/>
<polyline class="rd" points="0,662 13,655 28,657 37,662 33,672 20,682 0,697"/>
<polyline class="rd" points="0,668 14,660 27,661 33,666"/>
<polyline class="rd" points="246.4,500.5 243.9,509.5 241.5,520 230,547 227,567 220,583 215,595 214,605 230,625 227,643 230,667 220,693 212,713 205,743 202,767 208,800 213,817 215,845.6 220.3,861.6 229.6,878.8 241.6,897.4 243,900"/>
<polyline class="rd" points="419,500 421,513 418,526 410,540 396,552 383,562 365,566 353,571 347,582 344,600 346,617 339,653 333,690 328,713 320,730 317,770 322,835 322.6,843 334.5,861.6 338.5,878.8 339.8,890.8 342.5,900"/>
<polyline class="rd" points="0,815 33,827 67,838 93,857 113,873 127,883 147,885 160,883 170,900"/>
<polyline class="rd" points="874,0 875,20 876,43 878,67 874.8,95 875.3,100.5 877.1,109.7 879,117.1 879.4,127.2"/>
<polyline class="rd" points="912.5,129.5 918,133.6 923.5,138.2 925.4,144.6 926.7,155 929,160 930,180 939,200 947,217 942,230 959,240 972,253 979,263"/>
<polyline class="rd" points="241.5,2.9 245.8,8 257.2,7.2 277.2,6.3 285.8,2.3 291.5,0"/>
<polyline class="rd" points="384.2,117.7 388.7,115 391.3,117.7 389,126 386.9,131.9"/>
<polyline points="349,216 344,205 356,199 371,200 386,202 398,203 404,204 407,198 412,201 414,206 428,214 439,215 441,220 450,232 443,238 449,244 452,240 467,255 456,261 473,278 484,289 489,284 495,288 497,286 506,295 527,291 532,300 538.7,314.7 542,324.7 560,322 585.3,316.7 589.3,322.7 583.3,332 584,345.3 596,361.3 597.3,374.7 600.7,380.7 597.3,384.7 573.3,388.7 566.7,394.7 560,406.7 556,413.3 542.7,412.7 533,423 526,433 518,432 506,442 509,452 499,460 489,473 483,487 474,503 469,508 449,512 438,520 418,500 404,488 410,477 401,470 396,463 392,454 383,454 374,460 370,467 364,470 361,474 353,473 349,476 340,472 326,472 300,477 290,490 283,482 282,463 288,448 287,433 290.5,430 300.4,422.4 303.4,418.1 304,408.3 303.4,400.9 298.5,396.6 297.3,393.5 303.4,390.5 306.5,386.8 305.9,378.8 304,372.7 295.5,361.7 285,351.9 278.3,356.2 273.4,350.6 268.5,344.5 270.9,338.4 275.2,337.8 276.5,333.5 273.4,328.6 274.5,330 267.8,324.8 272.7,318.1 275.7,311.9 268.4,307.6 261,307 261.6,303.4 266.5,304.6 267.2,293.5 266.5,281.3 261.6,282.5 259.8,280.7 265.9,277.6 272.1,273.3 272.7,270.3 267.8,266 270.2,264.1 268.4,256.8 265.9,253.1 263.5,245.7 268.4,242.7 278.8,236.5 285.5,237.8 292.9,240.2 302.7,243.9 307.6,237.2 310.1,231.6 303.3,228.6 307,223.7 308.2,224.9 316.2,230.4 323.5,232.3 332.1,228.6 343.2,225.5 351.1,226.1 350.5,220 349,216" fill="none" stroke="#9c9c9c" stroke-width="1.5" stroke-linejoin="round"/>
<polyline points="349,216 344,205 356,199 371,200 386,202 398,203 404,204 407,198 412,201 414,206 428,214 439,215 441,220 450,232 443,238 449,244 452,240 467,255 456,261 473,278 484,289 489,284 495,288 497,286 506,295 527,291 532,300 538.7,314.7 542,324.7 560,322 585.3,316.7 589.3,322.7 583.3,332 584,345.3 596,361.3 597.3,374.7 600.7,380.7 597.3,384.7 573.3,388.7 566.7,394.7 560,406.7 556,413.3 542.7,412.7 533,423 526,433 518,432 506,442 509,452 499,460 489,473 483,487 474,503 469,508 449,512 438,520 418,500 404,488 410,477 401,470 396,463 392,454 383,454 374,460 370,467 364,470 361,474 353,473 349,476 340,472 326,472 300,477 290,490 283,482 282,463 288,448 287,433 290.5,430 300.4,422.4 303.4,418.1 304,408.3 303.4,400.9 298.5,396.6 297.3,393.5 303.4,390.5 306.5,386.8 305.9,378.8 304,372.7 295.5,361.7 285,351.9 278.3,356.2 273.4,350.6 268.5,344.5 270.9,338.4 275.2,337.8 276.5,333.5 273.4,328.6 274.5,330 267.8,324.8 272.7,318.1 275.7,311.9 268.4,307.6 261,307 261.6,303.4 266.5,304.6 267.2,293.5 266.5,281.3 261.6,282.5 259.8,280.7 265.9,277.6 272.1,273.3 272.7,270.3 267.8,266 270.2,264.1 268.4,256.8 265.9,253.1 263.5,245.7 268.4,242.7 278.8,236.5 285.5,237.8 292.9,240.2 302.7,243.9 307.6,237.2 310.1,231.6 303.3,228.6 307,223.7 308.2,224.9 316.2,230.4 323.5,232.3 332.1,228.6 343.2,225.5 351.1,226.1 350.5,220 349,216" fill="none" stroke="#2468f0" stroke-width="1.3" stroke-dasharray="1.5 15 3 24 1.2 12"/>
<text transform="translate(473.3,176.8) rotate(62)" fill="#8c8c8c" style="font-size:12px;letter-spacing:0px">Fót</text>
<text transform="translate(588.2,341.5) rotate(62)" fill="#8c8c8c" style="font-size:11px;letter-spacing:0.9px">Pécel</text>
<text transform="translate(794.6,350.3) rotate(18)" fill="#8c8c8c" style="font-size:12px;letter-spacing:0px">Kóka</text>
<text transform="translate(230.2,500.8) rotate(-17)" fill="#8c8c8c" style="font-size:12px;letter-spacing:0px">Érd</text>
<text transform="translate(862.3,133.8) rotate(-26)" fill="#5e5e5e" style="font-size:12px;letter-spacing:0px">Hatvan</text>
<g transform="translate(78.5,52.5) rotate(20)"><rect x="-7.88" y="-5.06" width="15.76" height="10.12" fill="#000"/><text x="0" y="3.96" text-anchor="middle" fill="#d2d2d2" style="font-size:11px">10</text></g>
<g transform="translate(95.5,339.8) rotate(12)"><rect x="-4.4" y="-4.6" width="8.8" height="9.2" fill="#000"/><text x="0" y="3.6" text-anchor="middle" fill="#d2d2d2" style="font-size:10px">1</text></g>
<g transform="translate(895.5,130.2) rotate(0)"><rect x="-4.98" y="-5.52" width="9.96" height="11.04" fill="#000"/><text x="0" y="4.32" text-anchor="middle" fill="#d2d2d2" style="font-size:12px">3</text></g>
<g transform="translate(694.5,173.5) rotate(0)"><rect x="-4.98" y="-5.52" width="9.96" height="11.04" fill="#2d2d2d"/><text x="0" y="4.32" text-anchor="middle" fill="#d2d2d2" style="font-size:12px">3</text></g>
<g transform="translate(462.9,168.5) rotate(-90)"><rect x="-4.69" y="-5.06" width="9.38" height="10.12" fill="#2d2d2d"/><text x="0" y="3.96" text-anchor="middle" fill="#d2d2d2" style="font-size:11px">2</text></g>
<g transform="translate(537,672.5) rotate(45)"><text x="0" y="3.6" text-anchor="middle" fill="#d2d2d2" style="font-size:10px">5</text></g>
<g transform="translate(215.9,595.4) rotate(-90)"><rect x="-4.69" y="-5.06" width="9.38" height="10.12" fill="#2d2d2d"/><text x="0" y="3.96" text-anchor="middle" fill="#d2d2d2" style="font-size:11px">6</text></g>
<g transform="translate(219.9,828.2) rotate(-90)"><rect x="-4.69" y="-5.06" width="9.38" height="10.12" fill="#000"/><text x="0" y="3.96" text-anchor="middle" fill="#d2d2d2" style="font-size:11px">6</text></g>
<rect x="0" y="13" width="372" height="17.5" fill="#000"/>
<text x="14.3" y="25" fill="#f2f2f2" textLength="352.6" lengthAdjust="spacing" style="font-size:12px">Budapest-HR Szél 30km (m/s) 3 fokos Monday 10-11-2025 01:33</text>
<path d="M0 14.5 L6 15.5 L8.5 17" stroke="#f0c080" stroke-width="1.4" fill="none"/>
<path d="M4 15 L9 16.5" stroke="#4a7ab8" stroke-width="1" fill="none"/>
<path d="M0 18.5 H7 M0 22 H6 M0 26 H7 M0.5 18.5 V26" stroke="#fff" stroke-width="1.1" fill="none"/>
<rect x="8" y="19.5" width="1.2" height="1.6" fill="#fff"/><rect x="8" y="24" width="1.2" height="1.6" fill="#fff"/>
<path d="M48 8.5 L63 0.5" stroke="#3f78b4" stroke-width="1" fill="none"/>
<path d="M71 8.5 L80 0" stroke="#f0c080" stroke-width="1.8" fill="none"/>
<path d="M76 8.5 L85 0" stroke="#fff" stroke-width="0.8" fill="none"/>
<clipPath id="cpd"><rect x="100" y="30.5" width="60" height="12"/></clipPath>
<g>
<rect x="222.5" y="841.5" width="755.5" height="56.5" fill="#dedede" fill-opacity="0.9" stroke="#3c3c3c" stroke-width="1"/>
<rect x="310.5" y="848.5" width="15" height="20" fill="#dcdcdc"/>
<rect x="325.5" y="848.5" width="15" height="20" fill="#a8a800"/>
<rect x="340.5" y="848.5" width="15" height="20" fill="#a87800"/>
<rect x="355.5" y="848.5" width="15" height="20" fill="#a85000"/>
<rect x="370.5" y="848.5" width="15" height="20" fill="#a85858"/>
<rect x="385.5" y="848.5" width="15" height="20" fill="#a858a8"/>
<rect x="400.5" y="848.5" width="15" height="20" fill="#a858ff"/>
<rect x="415.5" y="848.5" width="15" height="20" fill="#b458dc"/>
<rect x="430.5" y="848.5" width="15" height="20" fill="#c858b4"/>
<rect x="445.5" y="848.5" width="15" height="20" fill="#dc5880"/>
<rect x="460.5" y="848.5" width="15" height="20" fill="#f08040"/>
<rect x="475.5" y="848.5" width="15" height="20" fill="#ffa800"/>
<rect x="490.5" y="848.5" width="15" height="20" fill="#ffa818"/>
<rect x="505.5" y="848.5" width="15" height="20" fill="#f8a020"/>
<rect x="520.5" y="848.5" width="15" height="20" fill="#f09030"/>
<rect x="535.5" y="848.5" width="15" height="20" fill="#f08040"/>
<rect x="550.5" y="848.5" width="15" height="20" fill="#ff3c00"/>
<rect x="565.5" y="848.5" width="15" height="20" fill="#ff2800"/>
<rect x="580.5" y="848.5" width="15" height="20" fill="#ff0000"/>
<rect x="595.5" y="848.5" width="15" height="20" fill="#e00000"/>
<rect x="610.5" y="848.5" width="15" height="20" fill="#c80000"/>
<rect x="625.5" y="848.5" width="15" height="20" fill="#a80000"/>
<rect x="640.5" y="848.5" width="15" height="20" fill="#ffffff"/>
<rect x="655.5" y="848.5" width="15" height="20" fill="#007000"/>
<rect x="670.5" y="848.5" width="15" height="20" fill="#008800"/>
<rect x="685.5" y="848.5" width="15" height="20" fill="#00a000"/>
<rect x="700.5" y="848.5" width="15" height="20" fill="#00b800"/>
<rect x="715.5" y="848.5" width="15" height="20" fill="#00d000"/>
<rect x="730.5" y="848.5" width="15" height="20" fill="#00f000"/>
<rect x="745.5" y="848.5" width="15" height="20" fill="#40f000"/>
<rect x="760.5" y="848.5" width="15" height="20" fill="#80f030"/>
<rect x="775.5" y="848.5" width="15" height="20" fill="#b8f850"/>
<rect x="790.5" y="848.5" width="15" height="20" fill="#ffff70"/>
<rect x="805.5" y="848.5" width="15" height="20" fill="#e0ff98"/>
<rect x="820.5" y="848.5" width="15" height="20" fill="#c0ffb0"/>
<rect x="835.5" y="848.5" width="15" height="20" fill="#a0ffd0"/>
<rect x="850.5" y="848.5" width="15" height="20" fill="#80ffe8"/>
<rect x="865.5" y="848.5" width="15" height="20" fill="#60ffff"/>
<rect x="880.5" y="848.5" width="15" height="20" fill="#40e0ff"/>
<rect x="895.5" y="848.5" width="15" height="20" fill="#20c0ff"/>
<rect x="910.5" y="848.5" width="15" height="20" fill="#00a0ff"/>
<rect x="925.5" y="848.5" width="15" height="20" fill="#0070ff"/>
<rect x="940.5" y="848.5" width="15" height="20" fill="#0040ff"/>
<rect x="955.5" y="848.5" width="15" height="20" fill="#0000ff"/>
<path d="M310.5 848.5 H970.5 V868.5 H310.5 Z M325.5 848.5 V875.5 M340.5 848.5 V868.5 M355.5 848.5 V875.5 M370.5 848.5 V868.5 M385.5 848.5 V875.5 M400.5 848.5 V868.5 M415.5 848.5 V875.5 M430.5 848.5 V868.5 M445.5 848.5 V875.5 M460.5 848.5 V868.5 M475.5 848.5 V875.5 M490.5 848.5 V868.5 M505.5 848.5 V875.5 M520.5 848.5 V868.5 M535.5 848.5 V875.5 M550.5 848.5 V868.5 M565.5 848.5 V875.5 M580.5 848.5 V868.5 M595.5 848.5 V875.5 M610.5 848.5 V868.5 M625.5 848.5 V875.5 M640.5 848.5 V868.5 M655.5 848.5 V875.5 M670.5 848.5 V868.5 M685.5 848.5 V875.5 M700.5 848.5 V868.5 M715.5 848.5 V875.5 M730.5 848.5 V868.5 M745.5 848.5 V875.5 M760.5 848.5 V868.5 M775.5 848.5 V875.5 M790.5 848.5 V868.5 M805.5 848.5 V875.5 M820.5 848.5 V868.5 M835.5 848.5 V875.5 M850.5 848.5 V868.5 M865.5 848.5 V875.5 M880.5 848.5 V868.5 M895.5 848.5 V875.5 M910.5 848.5 V868.5 M925.5 848.5 V875.5 M940.5 848.5 V868.5 M955.5 848.5 V875.5" fill="none" stroke="#000" stroke-width="1"/>
<text x="324" y="887" text-anchor="middle" fill="#000">-64</text>
<text x="354" y="887" text-anchor="middle" fill="#000">-40</text>
<text x="384" y="887" text-anchor="middle" fill="#000">-36</text>
<text x="414" y="887" text-anchor="middle" fill="#000">-32</text>
<text x="444" y="887" text-anchor="middle" fill="#000">-28</text>
<text x="474" y="887" text-anchor="middle" fill="#000">-24</text>
<text x="504" y="887" text-anchor="middle" fill="#000">-20</text>
<text x="534" y="887" text-anchor="middle" fill="#000">-16</text>
<text x="564" y="887" text-anchor="middle" fill="#000">-12</text>
<text x="594" y="887" text-anchor="middle" fill="#000">-8</text>
<text x="624" y="887" text-anchor="middle" fill="#000">-4</text>
<text x="655.5" y="887" text-anchor="middle" fill="#000">0</text>
<text x="685.5" y="887" text-anchor="middle" fill="#000">4</text>
<text x="715.5" y="887" text-anchor="middle" fill="#000">8</text>
<text x="745.5" y="887" text-anchor="middle" fill="#000">12</text>
<text x="775.5" y="887" text-anchor="middle" fill="#000">16</text>
<text x="805.5" y="887" text-anchor="middle" fill="#000">20</text>
<text x="835.5" y="887" text-anchor="middle" fill="#000">24</text>
<text x="865.5" y="887" text-anchor="middle" fill="#000">28</text>
<text x="895.5" y="887" text-anchor="middle" fill="#000">32</text>
<text x="925.5" y="887" text-anchor="middle" fill="#000">36</text>
<text x="955.5" y="887" text-anchor="middle" fill="#000">40</text>
<text x="265.5" y="859" text-anchor="middle" fill="#000">Budapest-HR</text>
<text x="265.5" y="875" text-anchor="middle" fill="#000">Wind</text>
<text x="265.5" y="891" text-anchor="middle" fill="#000">m/s</text>
</g>
<g>
<rect x="12.3" y="843.9" width="43.7" height="44.1" rx="4.5" ry="4.5" fill="#e6e6e8"/>
<defs><linearGradient id="lg" gradientUnits="userSpaceOnUse" x1="20" y1="886" x2="50" y2="850"><stop offset="0" stop-color="#2b80d8"/><stop offset="0.4" stop-color="#2a9cb4"/><stop offset="1" stop-color="#3cc67a"/></linearGradient></defs>
<polygon points="20.62,872.80 20.18,872.05 19.72,871.30 19.26,870.54 18.81,869.76 18.39,868.95 18.00,868.11 17.68,867.24 17.42,866.35 17.26,865.43 17.20,864.50 17.22,863.57 17.29,862.64 17.41,861.71 17.57,860.80 17.78,859.89 18.03,858.99 18.33,858.10 18.67,857.23 19.06,856.38 19.49,855.55 19.97,854.74 20.49,853.95 21.04,853.20 21.64,852.47 22.27,851.77 22.94,851.11 23.65,850.48 24.39,849.89 25.15,849.34 25.95,848.83 26.78,848.36 27.63,847.94 28.50,847.56 29.39,847.23 30.30,846.95 31.22,846.72 32.15,846.54 33.10,846.40 34.05,846.33 35.00,846.30 35.95,846.33 36.90,846.40 37.85,846.53 38.78,846.70 39.71,846.93 40.62,847.20 41.52,847.52 42.40,847.89 43.25,848.30 44.09,848.76 44.90,849.26 45.68,849.80 46.43,850.39 47.15,851.01 47.83,851.67 48.48,852.36 49.10,853.08 49.67,853.84 50.21,854.63 50.70,855.44 51.15,856.27 51.55,857.13 51.91,858.01 52.22,858.90 52.49,859.81 52.71,860.74 52.88,861.67 53.00,862.61 53.08,863.55 53.10,864.50 53.09,865.45 53.07,866.40 53.02,867.35 52.94,868.31 52.83,869.28 52.68,870.25 52.49,871.21 52.24,872.18 51.94,873.13 51.57,874.07 51.15,874.99 50.66,875.88 50.10,876.73 49.48,877.54 48.79,878.29 48.07,879.01 47.35,879.74 46.61,880.48 45.85,881.21 45.06,881.93 44.24,882.63 43.37,883.30 42.46,883.94 41.51,884.52 40.51,885.05 39.47,885.51 38.39,885.88 37.28,886.16 36.14,886.34 35.00,886.40 33.85,886.38 32.71,886.32 31.56,886.22 30.41,886.07 29.27,885.88 28.14,885.63 27.01,885.32 25.89,884.96 24.79,884.55 23.70,884.07 22.64,883.53 21.62,882.92 20.62,882.25 19.67,881.52 18.77,880.73 17.92,879.88 17.13,878.97 17.13,878.97 17.96,879.84 18.92,880.58 19.98,881.18 21.09,881.67 22.24,882.07 23.38,882.39 24.52,882.65 25.62,882.90 26.69,883.16 27.72,883.46 28.74,883.77 29.81,883.87 30.90,883.78 31.99,883.53 33.04,883.15 34.05,882.67 35.00,882.13 35.89,881.57 36.74,881.03 37.54,880.54 38.32,880.14 39.12,879.86 39.88,879.53 40.57,879.01 41.17,878.35 41.68,877.60 42.10,876.80 42.46,875.99 42.78,875.21 43.09,874.49 43.43,873.86 43.84,873.34 44.25,872.83 44.55,872.23 44.75,871.58 44.85,870.90 44.88,870.20 44.85,869.52 44.77,868.85 44.66,868.21 44.56,867.61 44.48,867.04 44.45,866.51 44.48,866.00 44.54,865.50 44.57,865.00 44.57,864.50 44.53,864.00 44.46,863.51 44.36,863.02 44.22,862.54 44.06,862.07 43.88,861.62 43.66,861.18 43.42,860.75 43.16,860.34 42.88,859.95 42.57,859.58 42.25,859.23 41.91,858.90 41.56,858.60 41.19,858.31 40.81,858.05 40.42,857.80 40.03,857.58 39.62,857.38 39.21,857.21 38.80,857.05 38.38,856.91 37.96,856.80 37.53,856.70 37.11,856.62 36.69,856.56 36.26,856.52 35.84,856.49 35.42,856.48 35.00,856.49 34.58,856.51 34.16,856.54 33.75,856.59 33.33,856.66 32.92,856.74 32.51,856.84 32.11,856.96 31.71,857.10 31.31,857.26 30.92,857.43 30.54,857.63 30.16,857.84 29.80,858.08 29.45,858.33 29.11,858.61 28.78,858.90 28.47,859.21 28.17,859.54 27.89,859.89 27.64,860.25 27.40,860.63 27.19,861.02 27.00,861.43 26.84,861.85 26.70,862.28 26.59,862.71 26.50,863.15 26.41,863.60 26.33,864.05 26.26,864.50 26.20,864.96 26.15,865.43 26.13,865.91 26.13,866.39 26.15,866.87 26.22,867.35 26.32,867.83 26.46,868.30 26.64,868.76 26.86,869.20" fill="url(#lg)"/>
<polyline points="37.57,867.16 37.40,867.36 37.26,867.60 37.12,867.89 36.97,868.21 36.81,868.56 36.61,868.93 36.38,869.31 36.10,869.68 35.78,870.04 35.41,870.37 35.00,870.66 34.55,870.88 34.08,871.04 33.59,871.11 33.11,871.10 32.64,870.98 32.17,870.85 31.67,870.76 31.14,870.68 30.56,870.61 29.95,870.51 29.33,870.38 28.69,870.18 28.06,869.92 27.47,869.58 26.93,869.16 26.47,868.66 26.11,868.09 25.87,867.47 25.69,866.82 25.55,866.17 25.45,865.50 25.41,864.84 25.41,864.16 25.45,863.50 25.55,862.83 25.69,862.18 25.87,861.53" fill="none" stroke="url(#lg)" stroke-width="2" stroke-linecap="round"/>
<polyline points="25.97,869.71 25.71,869.23 25.49,868.73 25.31,868.22 25.16,867.70 25.05,867.17 24.96,866.63 24.92,866.10 24.90,865.56 24.92,865.03 24.96,864.50 25.03,863.98 25.11,863.46 25.20,862.95 25.30,862.44 25.42,861.93 25.58,861.44 25.76,860.95 25.97,860.48 26.21,860.02 26.47,859.58 26.76,859.15 27.07,858.74 27.41,858.35 27.76,857.98 28.13,857.63 28.52,857.30 28.92,856.99 29.34,856.71 29.77,856.44 30.21,856.20 30.66,855.99 31.12,855.79 31.59,855.62 32.07,855.47 32.55,855.34 33.03,855.24 33.52,855.16 34.01,855.10 34.50,855.05 35.00,855.03 35.50,855.03 35.99,855.05 36.49,855.09 36.99,855.15 37.48,855.24 37.97,855.34 38.47,855.47 38.95,855.62 39.43,855.80 39.91,856.00 40.37,856.22 40.83,856.47 41.28,856.74 41.72,857.04 42.14,857.36 42.55,857.71 42.94,858.07 43.31,858.46 43.66,858.87 43.99,859.31 44.30,859.76 44.58,860.23 44.84,860.72 45.07,861.23 45.27,861.75 45.44,862.28 45.57,862.83 45.68,863.38 45.75,863.94 45.79,864.50 45.79,865.07 45.76,865.63 45.70,866.19 45.66,866.77 45.67,867.36 45.72,867.98 45.78,868.64 45.83,869.32 45.86,870.03 45.84,870.76 45.75,871.48 45.59,872.19 45.34,872.87 44.99,873.50 44.55,874.05 44.09,874.60 43.70,875.24 43.33,875.96 42.94,876.73 42.52,877.53 42.04,878.32 41.48,879.06 40.84,879.72 40.12,880.24 39.31,880.60 38.49,880.91 37.66,881.31 36.81,881.77 35.93,882.25 35.00,882.74 34.02,883.20 32.99,883.60 31.92,883.92 30.83,884.11 29.73,884.16 28.65,884.03 27.62,883.73 26.58,883.42 25.50,883.14" fill="none" stroke="#e6e6e8" stroke-opacity="0.5" stroke-width="0.5"/>
<polyline points="25.08,870.23 24.79,869.70 24.53,869.16 24.30,868.61 24.10,868.04 23.94,867.46 23.80,866.88 23.71,866.29 23.66,865.69 23.64,865.10 23.67,864.50 23.73,863.91 23.81,863.32 23.90,862.74 24.01,862.16 24.15,861.59 24.32,861.03 24.52,860.48 24.76,859.94 25.02,859.41 25.31,858.91 25.63,858.42 25.98,857.94 26.35,857.49 26.74,857.06 27.15,856.65 27.59,856.27 28.04,855.91 28.51,855.57 29.00,855.26 29.50,854.98 30.01,854.72 30.54,854.48 31.08,854.28 31.62,854.10 32.17,853.95 32.73,853.82 33.29,853.72 33.86,853.65 34.43,853.60 35.00,853.58 35.57,853.58 36.14,853.61 36.72,853.67 37.29,853.75 37.85,853.85 38.42,853.99 38.97,854.15 39.53,854.34 40.07,854.55 40.60,854.79 41.13,855.06 41.64,855.36 42.14,855.68 42.62,856.04 43.09,856.41 43.54,856.81 43.96,857.24 44.37,857.69 44.75,858.17 45.11,858.66 45.44,859.18 45.74,859.72 46.02,860.27 46.26,860.84 46.47,861.43 46.65,862.02 46.79,862.63 46.90,863.25 46.97,863.87 47.00,864.50 47.01,865.13 46.98,865.76 46.92,866.39 46.87,867.02 46.87,867.68 46.88,868.36 46.90,869.07 46.90,869.80 46.87,870.55 46.79,871.31 46.65,872.07 46.44,872.81 46.13,873.52 45.74,874.17 45.25,874.75 44.75,875.33 44.31,875.99 43.87,876.71 43.43,877.48 42.95,878.26 42.41,879.04 41.80,879.77 41.11,880.42 40.35,880.96 39.51,881.34 38.65,881.68 37.78,882.07 36.89,882.50 35.97,882.94 35.00,883.35 33.99,883.73 32.94,884.06 31.86,884.30 30.76,884.44 29.66,884.45 28.57,884.30 27.52,883.99 26.46,883.67 25.39,883.37" fill="none" stroke="#e6e6e8" stroke-opacity="0.5" stroke-width="0.5"/>
<polyline points="24.19,870.74 23.87,870.17 23.57,869.59 23.29,868.99 23.04,868.39 22.83,867.76 22.64,867.13 22.50,866.48 22.41,865.82 22.37,865.16 22.38,864.50 22.43,863.84 22.51,863.19 22.60,862.54 22.72,861.89 22.88,861.25 23.06,860.62 23.28,860.00 23.54,859.40 23.83,858.81 24.15,858.23 24.50,857.68 24.88,857.15 25.28,856.63 25.72,856.14 26.18,855.68 26.66,855.24 27.16,854.82 27.69,854.43 28.23,854.08 28.79,853.75 29.37,853.45 29.96,853.17 30.56,852.93 31.17,852.72 31.80,852.55 32.43,852.40 33.06,852.28 33.71,852.20 34.35,852.15 35.00,852.12 35.65,852.13 36.30,852.17 36.94,852.24 37.59,852.34 38.22,852.47 38.86,852.63 39.48,852.82 40.10,853.05 40.71,853.30 41.30,853.59 41.88,853.90 42.45,854.25 43.00,854.63 43.53,855.03 44.04,855.46 44.53,855.92 44.99,856.41 45.43,856.92 45.84,857.46 46.23,858.02 46.58,858.60 46.91,859.20 47.20,859.82 47.45,860.45 47.68,861.10 47.86,861.77 48.01,862.44 48.12,863.12 48.19,863.81 48.22,864.50 48.22,865.19 48.20,865.89 48.14,866.58 48.09,867.28 48.06,868.00 48.04,868.74 48.02,869.50 47.97,870.27 47.88,871.06 47.75,871.86 47.55,872.65 47.28,873.42 46.93,874.16 46.49,874.84 45.96,875.46 45.42,876.07 44.91,876.74 44.42,877.47 43.91,878.22 43.37,879.00 42.77,879.75 42.11,880.47 41.38,881.12 40.58,881.67 39.71,882.08 38.81,882.44 37.90,882.83 36.97,883.23 36.00,883.62 35.00,883.96 33.96,884.26 32.90,884.51 31.80,884.68 30.69,884.76 29.58,884.73 28.48,884.56 27.42,884.26 26.35,883.93 25.27,883.61" fill="none" stroke="#e6e6e8" stroke-opacity="0.5" stroke-width="0.5"/>
<polyline points="23.30,871.26 22.95,870.64 22.61,870.02 22.28,869.38 21.99,868.73 21.72,868.06 21.48,867.37 21.30,866.67 21.16,865.95 21.09,865.23 21.08,864.50 21.13,863.77 21.20,863.05 21.30,862.33 21.43,861.62 21.60,860.91 21.80,860.21 22.05,859.53 22.32,858.86 22.64,858.20 22.98,857.56 23.37,856.94 23.78,856.35 24.22,855.77 24.70,855.22 25.20,854.70 25.73,854.20 26.28,853.74 26.86,853.30 27.46,852.89 28.08,852.52 28.72,852.17 29.37,851.87 30.04,851.59 30.73,851.35 31.42,851.15 32.13,850.98 32.84,850.85 33.55,850.75 34.28,850.69 35.00,850.67 35.72,850.68 36.45,850.73 37.17,850.81 37.88,850.93 38.60,851.08 39.30,851.27 39.99,851.50 40.67,851.76 41.34,852.05 42.00,852.38 42.64,852.74 43.25,853.14 43.85,853.57 44.43,854.02 44.99,854.51 45.52,855.03 46.02,855.58 46.49,856.15 46.93,856.75 47.35,857.37 47.72,858.02 48.07,858.68 48.38,859.37 48.65,860.07 48.88,860.78 49.07,861.51 49.23,862.25 49.34,862.99 49.41,863.74 49.44,864.50 49.44,865.26 49.41,866.02 49.36,866.77 49.30,867.54 49.25,868.32 49.20,869.11 49.13,869.93 49.04,870.75 48.90,871.58 48.70,872.41 48.45,873.23 48.12,874.04 47.72,874.80 47.24,875.52 46.67,876.17 46.08,876.81 45.52,877.49 44.97,878.22 44.40,878.97 43.79,879.73 43.14,880.47 42.43,881.18 41.65,881.83 40.81,882.38 39.91,882.83 38.98,883.21 38.02,883.60 37.05,883.96 36.04,884.30 35.00,884.57 33.94,884.79 32.85,884.96 31.74,885.07 30.62,885.09 29.50,885.02 28.39,884.83 27.31,884.53 26.23,884.19 25.15,883.84" fill="none" stroke="#e6e6e8" stroke-opacity="0.5" stroke-width="0.5"/>
<polyline points="22.41,871.77 22.02,871.11 21.65,870.45 21.28,869.77 20.93,869.07 20.61,868.36 20.32,867.62 20.09,866.86 19.92,866.09 19.81,865.30 19.79,864.50 19.83,863.70 19.90,862.91 20.01,862.13 20.15,861.34 20.33,860.57 20.55,859.80 20.81,859.05 21.11,858.31 21.45,857.59 21.82,856.89 22.23,856.21 22.68,855.55 23.16,854.91 23.68,854.31 24.22,853.72 24.80,853.17 25.41,852.65 26.04,852.16 26.69,851.71 27.37,851.29 28.07,850.90 28.79,850.56 29.53,850.25 30.28,849.98 31.05,849.75 31.82,849.56 32.61,849.41 33.40,849.30 34.20,849.24 35.00,849.21 35.80,849.23 36.60,849.28 37.39,849.38 38.18,849.52 38.97,849.70 39.74,849.92 40.50,850.17 41.25,850.47 41.98,850.80 42.69,851.17 43.39,851.58 44.06,852.03 44.71,852.51 45.34,853.02 45.94,853.56 46.51,854.14 47.04,854.75 47.55,855.38 48.02,856.04 48.46,856.73 48.86,857.44 49.23,858.17 49.55,858.91 49.84,859.68 50.08,860.46 50.29,861.25 50.44,862.05 50.56,862.86 50.63,863.68 50.66,864.50 50.66,865.32 50.63,866.14 50.58,866.97 50.52,867.80 50.45,868.64 50.36,869.49 50.25,870.35 50.10,871.22 49.91,872.10 49.66,872.96 49.35,873.82 48.97,874.65 48.51,875.44 47.98,876.19 47.37,876.87 46.74,877.54 46.13,878.24 45.51,878.97 44.88,879.72 44.22,880.46 43.50,881.19 42.74,881.89 41.92,882.53 41.04,883.10 40.11,883.57 39.14,883.98 38.15,884.36 37.12,884.70 36.07,884.98 35.00,885.18 33.91,885.32 32.80,885.42 31.68,885.45 30.55,885.42 29.43,885.30 28.31,885.10 27.21,884.79 26.12,884.45 25.03,884.08" fill="none" stroke="#e6e6e8" stroke-opacity="0.5" stroke-width="0.5"/>
<polyline points="21.51,872.29 21.10,871.58 20.68,870.87 20.27,870.15 19.87,869.42 19.50,868.65 19.16,867.87 18.88,867.05 18.67,866.22 18.53,865.36 18.49,864.50 18.52,863.64 18.60,862.78 18.71,861.92 18.86,861.07 19.05,860.23 19.29,859.40 19.57,858.58 19.89,857.77 20.25,856.99 20.66,856.22 21.10,855.47 21.58,854.75 22.10,854.06 22.66,853.39 23.25,852.75 23.87,852.14 24.53,851.57 25.21,851.03 25.92,850.52 26.66,850.06 27.42,849.63 28.21,849.25 29.01,848.90 29.84,848.60 30.67,848.35 31.52,848.14 32.38,847.97 33.25,847.85 34.12,847.78 35.00,847.76 35.88,847.78 36.75,847.84 37.62,847.95 38.48,848.11 39.34,848.31 40.18,848.56 41.01,848.85 41.82,849.18 42.62,849.55 43.39,849.97 44.14,850.42 44.87,850.92 45.57,851.45 46.24,852.01 46.88,852.62 47.49,853.25 48.07,853.92 48.61,854.61 49.11,855.33 49.58,856.08 50.01,856.85 50.39,857.65 50.73,858.46 51.03,859.29 51.29,860.14 51.50,860.99 51.66,861.86 51.78,862.74 51.85,863.62 51.88,864.50 51.88,865.38 51.85,866.27 51.80,867.16 51.73,868.06 51.64,868.96 51.52,869.87 51.37,870.78 51.17,871.70 50.92,872.61 50.62,873.52 50.25,874.40 49.81,875.26 49.31,876.09 48.73,876.86 48.08,877.58 47.41,878.28 46.74,878.99 46.06,879.72 45.37,880.46 44.64,881.19 43.87,881.91 43.06,882.59 42.19,883.23 41.27,883.81 40.31,884.31 39.30,884.74 38.27,885.12 37.20,885.43 36.11,885.66 35.00,885.79 33.88,885.85 32.75,885.87 31.62,885.84 30.48,885.75 29.35,885.59 28.22,885.36 27.11,885.06 26.00,884.71 24.91,884.31" fill="none" stroke="#e6e6e8" stroke-opacity="0.5" stroke-width="0.5"/>
</g>
<text class="lb" x="106.5" y="38" clip-path="url(#cpd)">DOROG</text>
<text class="lb" x="290.5" y="110">SZENTENDRE</text>
<text class="lb" x="416" y="139">DUNAKESZI</text>
<text class="lb" x="721" y="133.7">ASZÓD</text>
<text class="lb" x="901.4" y="112">HATVAN</text>
<text class="lb" x="624.6" y="189.8" textLength="61" lengthAdjust="spacing">GÖDÖLLŐ</text>
<text class="lb" x="26.5" y="341.7">BICSKE</text>
<text class="lb" x="221" y="382.7">BUDAÖRS</text>
<text class="lb" x="468.5" y="378">BUDAPEST</text>
<text class="lb" x="863" y="440" textLength="65.4" lengthAdjust="spacing">NAGYKÁTA</text>
<text class="lb" x="197.5" y="474">ÉRD</text>
<text class="lb" x="679" y="510" textLength="46.7" lengthAdjust="spacing">MONOR</text>
<text class="lb" x="231" y="532">SZIGETSZENTMIKLÓS</text>
<text class="lb" x="174.5" y="548.5" textLength="111" lengthAdjust="spacing">SZÁZHALOMBATTA</text>
<text class="lb" x="15.3" y="709" textLength="61.3" lengthAdjust="spacing">GÁRDONY</text>
<text class="lb" x="274.2" y="745">RÁCKEVE</text>
<text class="lb" x="538" y="735">DABAS</text>
<text class="lb" x="899.5" y="894">NAGYKŐRÖS</text>
<text class="lb" x="420.5" y="900.5">KUNSZENTMIKLÓS</text>
</svg></body></html>
